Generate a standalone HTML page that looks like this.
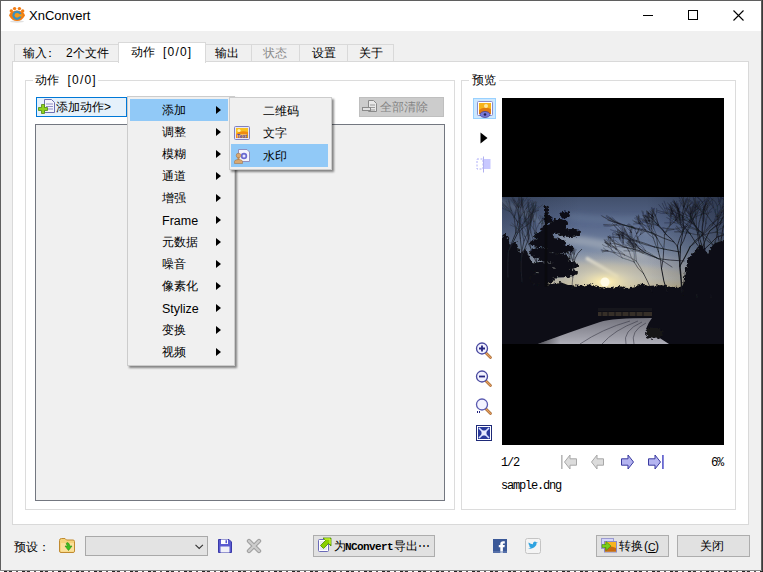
<!DOCTYPE html>
<html><head><meta charset="utf-8">
<style>
*{margin:0;padding:0;box-sizing:border-box}
html,body{width:763px;height:572px;overflow:hidden;background:#f0f0f0;font-family:"Liberation Sans",sans-serif;font-size:12px;color:#000}
.a{position:absolute}
.t{position:absolute;white-space:nowrap;line-height:12px;font-size:12px}
.m{font-family:"Liberation Mono",monospace;letter-spacing:-1.2px}
svg{position:absolute;overflow:visible}
.arr{position:absolute;width:0;height:0;border-top:4px solid transparent;border-bottom:4px solid transparent;border-left:5px solid #000}
</style></head><body>
<!-- window frame -->
<div class="a" style="left:0;top:0;width:763px;height:31px;background:#fff"></div>
<div class="a" style="left:0;top:0;width:1px;height:571px;background:#5f5f5f"></div>
<div class="a" style="left:0;top:0;width:763px;height:1px;background:#5f5f5f"></div>
<div class="a" style="left:761px;top:0;width:1px;height:571px;background:#5f5f5f"></div><div class="a" style="left:762px;top:0;width:1px;height:572px;background:#3a3a3a"></div>
<div class="a" style="left:0;top:570px;width:762px;height:1px;background:#8a8a8a"></div>
<div class="a" style="left:0;top:571px;width:763px;height:1px;background:repeating-linear-gradient(90deg,#fff 0 4px,#222 4px 7px,#ddd 7px 9px,#333 9px 12px,#fff 12px 16px,#555 16px 18px)"></div>

<!-- app icon -->
<svg style="left:8px;top:6px" width="18" height="17" viewBox="0 0 18 17">
 <ellipse cx="9" cy="15.5" rx="7" ry="1.2" fill="#000" opacity=".12"/>
 <g fill="#f27c12">
  <circle cx="3.3" cy="5" r="1.7"/><circle cx="6.6" cy="2.6" r="1.7"/><circle cx="11.4" cy="2.6" r="1.7"/><circle cx="14.7" cy="5" r="1.7"/>
  <path d="M1 9.5 Q2 5 9 4.5 Q16 5 17 9.5 Q14 15 9 15 Q4 15 1 9.5Z"/>
 </g>
 <circle cx="9" cy="9.3" r="4.6" fill="#3a8fbf"/>
 <circle cx="9" cy="9.3" r="2.4" fill="#f49a1a"/>
 <rect x="10.5" y="8.2" width="4" height="2.3" fill="#f49a1a"/>
</svg>
<div class="t" style="left:29px;top:9px;font-size:13px;line-height:13px">XnConvert</div>

<!-- caption buttons -->
<div class="a" style="left:643px;top:15px;width:10px;height:1px;background:#000"></div>
<div class="a" style="left:688px;top:10px;width:10px;height:10px;border:1px solid #000"></div>
<svg style="left:733px;top:10px" width="11" height="11" viewBox="0 0 11 11"><path d="M0.5 0.5L10.5 10.5M10.5 0.5L0.5 10.5" stroke="#000" stroke-width="1.1"/></svg>

<!-- tab control -->
<div class="a" style="left:12px;top:61px;width:737px;height:464px;background:#fff;border:1px solid #d9d9d9"></div>
<div class="a" style="left:14px;top:44px;width:105px;height:17px;background:#f0f0f0;border:1px solid #d9d9d9;border-bottom:none"></div>
<div class="a" style="left:205px;top:44px;width:47px;height:17px;background:#f0f0f0;border:1px solid #d9d9d9;border-bottom:none"></div>
<div class="a" style="left:251px;top:44px;width:49px;height:17px;background:#f0f0f0;border:1px solid #d9d9d9;border-bottom:none"></div>
<div class="a" style="left:299px;top:44px;width:49px;height:17px;background:#f0f0f0;border:1px solid #d9d9d9;border-bottom:none"></div>
<div class="a" style="left:347px;top:44px;width:47px;height:17px;background:#f0f0f0;border:1px solid #d9d9d9;border-bottom:none"></div>
<div class="a" style="left:118px;top:42px;width:88px;height:21px;background:#fff;border:1px solid #d9d9d9;border-bottom:none"></div>
<div class="t" style="left:23px;top:47px">输入</div><div class="t" style="left:44px;top:47px">：</div>
<div class="t" style="left:66px;top:47px">2</div><div class="t" style="left:72.7px;top:47px">个文件</div>
<div class="t" style="left:131px;top:46px">动作</div>
<div class="t" style="left:163px;top:46px;letter-spacing:1.2px">[0/0]</div>
<div class="t" style="left:215px;top:47px">输出</div>
<div class="t" style="left:263px;top:47px;color:#8c8c8c">状态</div>
<div class="t" style="left:312px;top:47px">设置</div>
<div class="t" style="left:359px;top:47px">关于</div>

<!-- group boxes -->
<div class="a" style="left:25px;top:80px;width:430px;height:430px;border:1px solid #dcdcdc"></div>
<div class="a" style="left:33px;top:74px;width:65px;height:12px;background:#fff"></div>
<div class="t" style="left:35px;top:74px">动作</div>
<div class="t" style="left:67.5px;top:74px;letter-spacing:1.2px">[0/0]</div>
<div class="a" style="left:461px;top:80px;width:275px;height:430px;border:1px solid #dcdcdc"></div>
<div class="a" style="left:469px;top:74px;width:30px;height:12px;background:#fff"></div>
<div class="t" style="left:472px;top:74px">预览</div>

<!-- action buttons -->
<div class="a" style="left:36px;top:97px;width:91px;height:20px;background:#e5f1fb;border:1px solid #0078d7"></div>
<svg style="left:38px;top:99px" width="18" height="16" viewBox="0 0 18 16">
 <path d="M6.5 0.5H13.5L16.5 3.5V13.5H6.5Z" fill="#f4f4fb" stroke="#7070b0"/>
 <path d="M8 5H15M8 7.5H15M8 10H15" stroke="#9090c8" stroke-width="1"/>
 <path d="M3.5 5.5H6.5V8.5H9.5V11.5H6.5V14.5H3.5V11.5H0.5V8.5H3.5Z" fill="#8fd11d" stroke="#4e8a10" stroke-width=".8"/>
</svg>
<div class="t" style="left:56px;top:101px">添加动作</div><div class="t" style="left:104px;top:101px">&gt;</div>
<div class="a" style="left:359px;top:97px;width:85px;height:20px;background:#cccccc;border:1px solid #bfbfbf"></div>
<svg style="left:362px;top:100px" width="16" height="13" viewBox="0 0 16 13">
 <path d="M6.5 0.5H11.5L14.5 3.5V11.5H6.5Z" fill="#e8e8e8" stroke="#8a8a8a"/>
 <path d="M8 5H13M8 7.5H13M8 10H13" stroke="#9a9a9a"/>
 <rect x="0.5" y="7.5" width="8" height="3" fill="#e0e0e0" stroke="#8a8a8a"/>
</svg>
<div class="t" style="left:380px;top:101px;color:#838383">全部清除</div>

<!-- listbox -->
<div class="a" style="left:35px;top:124px;width:410px;height:377px;background:#f0f0f0;border:1px solid #737780"></div>

<!-- preview -->
<div class="a" style="left:502px;top:98px;width:222px;height:347px;background:#000"></div>
<div id="photo" class="a" style="left:502px;top:197px;width:222px;height:147px;overflow:hidden;background:#111"><svg width="222" height="147" viewBox="0 0 222 147" style="left:0;top:0">
<defs>
 <linearGradient id="sky" x1="0" y1="0" x2="0" y2="1">
  <stop offset="0" stop-color="#42506c"/>
  <stop offset=".18" stop-color="#56668a"/>
  <stop offset=".34" stop-color="#7484a0"/>
  <stop offset=".46" stop-color="#a0a8b6"/>
  <stop offset=".55" stop-color="#bcbcb6"/>
  <stop offset=".61" stop-color="#c8bc9a"/>
  <stop offset=".7" stop-color="#6a6252"/>
  <stop offset="1" stop-color="#111"/>
 </linearGradient>
 <linearGradient id="skyh" x1="0" y1="0" x2="1" y2="0">
  <stop offset="0" stop-color="#141a28" stop-opacity=".25"/>
  <stop offset=".35" stop-color="#141a28" stop-opacity="0"/>
  <stop offset=".65" stop-color="#141a28" stop-opacity="0"/>
  <stop offset="1" stop-color="#141a28" stop-opacity=".45"/>
 </linearGradient>
 <radialGradient id="sun" cx="103" cy="85" r="42" gradientUnits="userSpaceOnUse" gradientTransform="translate(103 85) scale(1.7 .75) translate(-103 -85)">
  <stop offset="0" stop-color="#fffbe0"/>
  <stop offset=".1" stop-color="#f6e8b0"/>
  <stop offset=".35" stop-color="#d8d0b0" stop-opacity=".7"/>
  <stop offset="1" stop-color="#9a9a98" stop-opacity="0"/>
 </radialGradient>
 <linearGradient id="road" x1="0" y1="0" x2="0" y2="1">
  <stop offset="0" stop-color="#74747e"/>
  <stop offset="1" stop-color="#aeaeb8"/>
 </linearGradient>
 <filter id="b1" x="-10%" y="-10%" width="120%" height="120%"><feGaussianBlur stdDeviation=".5"/></filter>
 <filter id="b2" x="-20%" y="-20%" width="140%" height="140%"><feGaussianBlur stdDeviation="2.2"/></filter>
 <filter id="rough" x="-20%" y="-20%" width="140%" height="140%"><feTurbulence type="fractalNoise" baseFrequency=".35" numOctaves="2" seed="3"/><feDisplacementMap in="SourceGraphic" scale="5" xChannelSelector="R" yChannelSelector="G"/><feGaussianBlur stdDeviation=".4"/></filter>
 <filter id="b2s" x="-20%" y="-50%" width="140%" height="200%"><feGaussianBlur stdDeviation="1"/></filter>
 <filter id="b3" x="-10%" y="-10%" width="120%" height="120%"><feGaussianBlur stdDeviation=".3"/></filter>
</defs>
<rect width="222" height="147" fill="url(#sky)"/>
<g filter="url(#b2)" fill="none" stroke-linecap="round">
 <path d="M-5 2 Q30 18 60 40" stroke="#8e9cb2" stroke-width="3" opacity=".6"/>
 <path d="M60 42 Q100 45 140 58" stroke="#a8b0bc" stroke-width="9" opacity=".6"/>
 <path d="M70 20 Q110 25 150 22" stroke="#7080a0" stroke-width="8" opacity=".35"/>
 <path d="M110 28 Q140 34 165 42" stroke="#7e8ca4" stroke-width="6" opacity=".45"/>
 <path d="M70 70 Q120 68 180 78" stroke="#c0b8a4" stroke-width="7" opacity=".5"/>
 <path d="M120 58 Q160 62 190 72" stroke="#a8aab0" stroke-width="7" opacity=".5"/>
</g>
<path d="M84 61 Q100 70 116 80" stroke="#f4f0e0" stroke-width="3.2" opacity=".85" fill="none" filter="url(#b2s)"/>
<rect width="222" height="147" fill="url(#skyh)"/>
<rect width="222" height="147" fill="url(#sun)"/>
<circle cx="103" cy="85" r="4.5" fill="#fffbe6" filter="url(#b1)"/>
<!-- treeline / ground -->
<path d="M-6 89 L0 89 L20 88 L26 85 L32 88 L50 87 L58 85 L66 88 L80 89 L88 87 L96 90 L110 91 L118 89 L124 91 L134 89 L140 86 L146 89 L160 88 L170 90 L222 88 L228 88 V153 H-6Z" fill="#0f0f13" filter="url(#rough)"/>
<!-- left dark trees -->
<path d="M-6 40 L0 40 L4 36 L8 48 L14 44 L18 56 L24 52 L28 62 L34 72 L40 86 L40 95 L-6 95Z" fill="#0f0f13" filter="url(#rough)"/>
<g stroke="#1a1d26" fill="none" stroke-linecap="round" filter="url(#b3)">
<path d="M6.0 80.0Q5.5 67.1 6.5 54.0" stroke-width="1.20"/>
<path d="M6.5 54.0Q11.4 45.2 15.8 35.8" stroke-width="0.86"/>
<path d="M15.8 35.8Q18.5 28.1 18.2 20.6" stroke-width="0.62"/>
<path d="M18.2 20.6Q17.9 14.8 19.7 8.2" stroke-width="0.45"/>
<path d="M19.7 8.2Q20.5 2.7 19.6 -0.8" stroke-width="0.32"/>
<path d="M19.7 8.2Q19.4 3.7 19.6 -2.1" stroke-width="0.32"/>
<path d="M19.7 8.2Q22.9 3.6 25.3 0.2" stroke-width="0.32"/>
<path d="M18.2 20.6Q20.7 16.3 24.5 11.3" stroke-width="0.45"/>
<path d="M24.5 11.3Q26.7 7.9 26.1 2.1" stroke-width="0.32"/>
<path d="M24.5 11.3Q26.7 6.9 28.9 3.5" stroke-width="0.32"/>
<path d="M24.5 11.3Q28.1 7.6 31.0 6.5" stroke-width="0.32"/>
<path d="M18.2 20.6Q16.2 16.7 14.0 10.1" stroke-width="0.45"/>
<path d="M14.0 10.1Q12.2 7.9 9.3 2.9" stroke-width="0.32"/>
<path d="M14.0 10.1Q12.7 6.2 10.6 1.8" stroke-width="0.32"/>
<path d="M15.8 35.8Q21.3 30.2 28.2 25.7" stroke-width="0.62"/>
<path d="M28.2 25.7Q30.1 18.3 31.6 13.8" stroke-width="0.45"/>
<path d="M31.6 13.8Q33.5 9.0 34.7 5.1" stroke-width="0.32"/>
<path d="M31.6 13.8Q30.9 10.8 29.2 5.0" stroke-width="0.32"/>
<path d="M31.6 13.8Q32.1 8.0 30.6 3.6" stroke-width="0.32"/>
<path d="M28.2 25.7Q31.2 19.2 33.2 14.1" stroke-width="0.45"/>
<path d="M33.2 14.1Q33.9 8.0 33.4 4.3" stroke-width="0.32"/>
<path d="M33.2 14.1Q37.4 10.3 40.2 8.1" stroke-width="0.32"/>
<path d="M6.5 54.0Q9.5 45.9 13.8 36.0" stroke-width="0.86"/>
<path d="M13.8 36.0Q13.3 28.0 12.2 20.5" stroke-width="0.62"/>
<path d="M12.2 20.5Q13.1 14.4 14.9 8.9" stroke-width="0.45"/>
<path d="M14.9 8.9Q15.8 3.9 17.2 0.7" stroke-width="0.32"/>
<path d="M14.9 8.9Q17.3 5.8 21.3 1.1" stroke-width="0.32"/>
<path d="M12.2 20.5Q13.8 13.8 16.9 9.9" stroke-width="0.45"/>
<path d="M16.9 9.9Q19.7 5.7 20.2 2.0" stroke-width="0.32"/>
<path d="M16.9 9.9Q19.0 7.4 21.7 2.1" stroke-width="0.32"/>
<path d="M16.9 9.9Q18.4 4.6 17.5 1.5" stroke-width="0.32"/>
<path d="M12.2 20.5Q9.6 14.0 4.8 10.2" stroke-width="0.45"/>
<path d="M4.8 10.2Q1.1 5.4 -2.7 3.4" stroke-width="0.32"/>
<path d="M4.8 10.2Q2.5 8.7 -2.7 5.0" stroke-width="0.32"/>
<path d="M13.8 36.0Q14.9 28.0 17.1 21.4" stroke-width="0.62"/>
<path d="M17.1 21.4Q16.3 16.6 18.5 10.4" stroke-width="0.45"/>
<path d="M18.5 10.4Q19.1 6.9 20.0 2.5" stroke-width="0.32"/>
<path d="M18.5 10.4Q20.5 6.2 21.3 2.2" stroke-width="0.32"/>
<path d="M17.1 21.4Q15.2 15.3 16.1 10.4" stroke-width="0.45"/>
<path d="M16.1 10.4Q16.9 5.1 17.9 2.2" stroke-width="0.32"/>
<path d="M16.1 10.4Q12.4 5.4 11.7 2.6" stroke-width="0.32"/>
<path d="M16.1 10.4Q15.4 5.6 12.7 3.1" stroke-width="0.32"/>
<path d="M13.8 36.0Q19.0 30.6 22.5 25.0" stroke-width="0.62"/>
<path d="M22.5 25.0Q23.1 19.8 26.0 14.4" stroke-width="0.45"/>
<path d="M26.0 14.4Q27.5 9.1 26.9 5.4" stroke-width="0.32"/>
<path d="M26.0 14.4Q27.5 10.0 26.2 5.3" stroke-width="0.32"/>
<path d="M26.0 14.4Q29.4 11.5 32.3 8.2" stroke-width="0.32"/>
<path d="M22.5 25.0Q27.0 20.5 28.9 15.4" stroke-width="0.45"/>
<path d="M28.9 15.4Q28.4 10.8 30.1 6.0" stroke-width="0.32"/>
<path d="M28.9 15.4Q32.8 14.0 36.2 9.7" stroke-width="0.32"/>
<path d="M22.5 25.0Q25.8 22.0 29.2 16.7" stroke-width="0.45"/>
<path d="M29.2 16.7Q33.2 14.9 36.7 13.3" stroke-width="0.32"/>
<path d="M29.2 16.7Q32.1 14.1 36.6 13.0" stroke-width="0.32"/>
<path d="M20.0 85.0Q18.6 73.4 19.3 61.0" stroke-width="1.00"/>
<path d="M19.3 61.0Q22.2 52.6 26.5 42.0" stroke-width="0.72"/>
<path d="M26.5 42.0Q27.2 33.4 26.2 27.1" stroke-width="0.52"/>
<path d="M26.2 27.1Q27.7 22.1 30.1 16.5" stroke-width="0.37"/>
<path d="M30.1 16.5Q30.1 12.1 31.2 8.4" stroke-width="0.30"/>
<path d="M30.1 16.5Q30.8 13.1 33.0 8.7" stroke-width="0.30"/>
<path d="M30.1 16.5Q32.0 12.4 34.7 8.5" stroke-width="0.30"/>
<path d="M26.2 27.1Q26.1 21.3 28.2 15.5" stroke-width="0.37"/>
<path d="M28.2 15.5Q27.5 11.9 25.4 6.9" stroke-width="0.30"/>
<path d="M28.2 15.5Q30.3 12.6 33.3 8.4" stroke-width="0.30"/>
<path d="M26.5 42.0Q25.9 34.7 25.0 27.0" stroke-width="0.52"/>
<path d="M25.0 27.0Q23.3 22.5 22.2 15.8" stroke-width="0.37"/>
<path d="M22.2 15.8Q21.8 11.7 20.2 7.4" stroke-width="0.30"/>
<path d="M22.2 15.8Q20.1 11.3 20.1 6.2" stroke-width="0.30"/>
<path d="M25.0 27.0Q26.8 21.0 27.2 14.5" stroke-width="0.37"/>
<path d="M27.2 14.5Q30.0 9.0 32.6 5.5" stroke-width="0.30"/>
<path d="M27.2 14.5Q31.0 9.5 32.1 5.1" stroke-width="0.30"/>
<path d="M19.3 61.0Q19.7 52.8 22.0 43.8" stroke-width="0.72"/>
<path d="M22.0 43.8Q24.9 37.5 27.9 31.0" stroke-width="0.52"/>
<path d="M27.9 31.0Q27.4 26.1 28.6 19.3" stroke-width="0.37"/>
<path d="M28.6 19.3Q30.2 16.1 33.1 11.9" stroke-width="0.30"/>
<path d="M28.6 19.3Q26.9 15.0 27.8 10.5" stroke-width="0.30"/>
<path d="M28.6 19.3Q31.9 15.7 32.7 10.8" stroke-width="0.30"/>
<path d="M27.9 31.0Q29.2 25.4 28.8 20.3" stroke-width="0.37"/>
<path d="M28.8 20.3Q30.0 15.0 31.3 12.3" stroke-width="0.30"/>
<path d="M28.8 20.3Q29.9 14.8 31.2 12.2" stroke-width="0.30"/>
<path d="M22.0 43.8Q20.1 38.5 20.0 31.5" stroke-width="0.52"/>
<path d="M20.0 31.5Q20.2 25.2 22.4 21.8" stroke-width="0.37"/>
<path d="M22.4 21.8Q21.4 17.0 23.2 14.5" stroke-width="0.30"/>
<path d="M22.4 21.8Q23.1 17.4 22.5 14.6" stroke-width="0.30"/>
<path d="M22.4 21.8Q20.5 18.4 20.7 14.2" stroke-width="0.30"/>
<path d="M20.0 31.5Q22.8 27.9 23.9 21.6" stroke-width="0.37"/>
<path d="M23.9 21.6Q25.1 17.9 24.5 13.5" stroke-width="0.30"/>
<path d="M23.9 21.6Q26.2 16.6 27.4 14.6" stroke-width="0.30"/>
<path d="M19.3 61.0Q20.0 52.4 18.3 41.1" stroke-width="0.72"/>
<path d="M18.3 41.1Q17.3 32.6 15.4 24.8" stroke-width="0.52"/>
<path d="M15.4 24.8Q12.4 19.3 9.3 13.5" stroke-width="0.37"/>
<path d="M9.3 13.5Q7.0 9.0 6.6 3.0" stroke-width="0.30"/>
<path d="M9.3 13.5Q6.3 9.9 4.2 4.4" stroke-width="0.30"/>
<path d="M9.3 13.5Q8.2 9.8 7.3 4.5" stroke-width="0.30"/>
<path d="M15.4 24.8Q12.7 20.1 7.7 14.5" stroke-width="0.37"/>
<path d="M7.7 14.5Q4.2 13.6 -1.0 10.2" stroke-width="0.30"/>
<path d="M7.7 14.5Q3.1 11.8 0.5 8.3" stroke-width="0.30"/>
<path d="M18.3 41.1Q17.4 33.8 17.6 24.1" stroke-width="0.52"/>
<path d="M17.6 24.1Q15.7 18.3 16.6 10.5" stroke-width="0.37"/>
<path d="M16.6 10.5Q12.5 6.8 10.2 0.7" stroke-width="0.30"/>
<path d="M16.6 10.5Q14.6 6.4 11.6 1.0" stroke-width="0.30"/>
<path d="M16.6 10.5Q15.9 4.9 17.0 -0.9" stroke-width="0.30"/>
<path d="M17.6 24.1Q19.8 16.8 21.0 10.2" stroke-width="0.37"/>
<path d="M21.0 10.2Q18.8 5.7 18.1 -0.9" stroke-width="0.30"/>
<path d="M21.0 10.2Q20.7 5.3 19.2 -1.9" stroke-width="0.30"/>
<path d="M21.0 10.2Q25.4 5.6 28.3 1.5" stroke-width="0.30"/>
<path d="M32.0 88.0Q32.7 77.1 34.7 66.2" stroke-width="0.90"/>
<path d="M34.7 66.2Q34.4 57.9 35.9 49.8" stroke-width="0.65"/>
<path d="M35.9 49.8Q36.0 42.4 34.6 36.3" stroke-width="0.47"/>
<path d="M34.6 36.3Q33.6 29.7 32.9 24.9" stroke-width="0.34"/>
<path d="M32.9 24.9Q35.1 21.7 34.4 15.7" stroke-width="0.30"/>
<path d="M32.9 24.9Q31.0 20.2 30.2 15.7" stroke-width="0.30"/>
<path d="M34.6 36.3Q31.8 32.3 28.9 28.1" stroke-width="0.34"/>
<path d="M28.9 28.1Q30.1 25.4 28.4 20.9" stroke-width="0.30"/>
<path d="M28.9 28.1Q25.8 25.4 23.2 23.6" stroke-width="0.30"/>
<path d="M35.9 49.8Q38.3 43.0 39.2 37.2" stroke-width="0.47"/>
<path d="M39.2 37.2Q40.6 33.3 40.9 26.8" stroke-width="0.34"/>
<path d="M40.9 26.8Q41.1 23.9 39.8 19.2" stroke-width="0.30"/>
<path d="M40.9 26.8Q39.3 22.8 38.0 18.6" stroke-width="0.30"/>
<path d="M40.9 26.8Q43.5 23.3 44.5 20.1" stroke-width="0.30"/>
<path d="M39.2 37.2Q39.1 33.1 39.6 26.9" stroke-width="0.34"/>
<path d="M39.6 26.9Q40.1 23.5 43.5 19.6" stroke-width="0.30"/>
<path d="M39.6 26.9Q38.0 24.3 36.4 20.1" stroke-width="0.30"/>
<path d="M34.7 66.2Q30.2 57.9 28.6 50.8" stroke-width="0.65"/>
<path d="M28.6 50.8Q24.7 44.5 23.0 39.6" stroke-width="0.47"/>
<path d="M23.0 39.6Q21.6 35.3 18.7 29.8" stroke-width="0.34"/>
<path d="M18.7 29.8Q18.6 26.3 17.7 20.9" stroke-width="0.30"/>
<path d="M18.7 29.8Q18.7 25.8 20.0 21.5" stroke-width="0.30"/>
<path d="M23.0 39.6Q19.9 36.1 15.6 31.8" stroke-width="0.34"/>
<path d="M15.6 31.8Q13.1 28.4 9.9 26.2" stroke-width="0.30"/>
<path d="M15.6 31.8Q13.4 29.2 8.2 28.0" stroke-width="0.30"/>
<path d="M28.6 50.8Q25.5 43.6 25.4 37.2" stroke-width="0.47"/>
<path d="M25.4 37.2Q26.6 33.5 28.6 27.1" stroke-width="0.34"/>
<path d="M28.6 27.1Q27.9 23.4 27.4 18.3" stroke-width="0.30"/>
<path d="M28.6 27.1Q29.1 23.1 31.4 18.7" stroke-width="0.30"/>
<path d="M25.4 37.2Q24.3 32.5 20.3 28.3" stroke-width="0.34"/>
<path d="M20.3 28.3Q18.5 26.9 14.5 23.7" stroke-width="0.30"/>
<path d="M20.3 28.3Q16.6 25.6 14.1 22.9" stroke-width="0.30"/>
<path d="M28.6 50.8Q28.5 44.0 27.3 38.2" stroke-width="0.47"/>
<path d="M27.3 38.2Q25.8 34.5 24.2 29.4" stroke-width="0.34"/>
<path d="M24.2 29.4Q23.8 25.2 23.8 22.4" stroke-width="0.30"/>
<path d="M24.2 29.4Q23.6 24.6 22.2 22.4" stroke-width="0.30"/>
<path d="M27.3 38.2Q25.0 33.6 25.3 28.9" stroke-width="0.34"/>
<path d="M25.3 28.9Q24.5 26.1 24.1 21.0" stroke-width="0.30"/>
<path d="M25.3 28.9Q25.3 24.9 25.3 22.0" stroke-width="0.30"/>
<path d="M34.7 66.2Q32.5 58.0 33.2 49.5" stroke-width="0.65"/>
<path d="M33.2 49.5Q33.9 43.6 32.7 35.8" stroke-width="0.47"/>
<path d="M32.7 35.8Q31.0 31.3 31.6 24.6" stroke-width="0.34"/>
<path d="M31.6 24.6Q29.4 20.9 28.5 16.9" stroke-width="0.30"/>
<path d="M31.6 24.6Q31.6 19.7 29.6 16.8" stroke-width="0.30"/>
<path d="M32.7 35.8Q34.3 31.5 37.3 26.3" stroke-width="0.34"/>
<path d="M37.3 26.3Q39.3 24.0 41.7 20.1" stroke-width="0.30"/>
<path d="M37.3 26.3Q40.0 23.1 43.7 20.4" stroke-width="0.30"/>
<path d="M37.3 26.3Q39.6 24.5 43.4 20.8" stroke-width="0.30"/>
<path d="M33.2 49.5Q31.5 42.8 28.9 35.9" stroke-width="0.47"/>
<path d="M28.9 35.9Q28.1 30.7 26.7 25.1" stroke-width="0.34"/>
<path d="M26.7 25.1Q27.3 22.1 26.3 16.6" stroke-width="0.30"/>
<path d="M26.7 25.1Q28.6 22.4 28.5 17.0" stroke-width="0.30"/>
<path d="M28.9 35.9Q28.1 31.5 28.8 24.9" stroke-width="0.34"/>
<path d="M28.8 24.9Q29.9 20.8 31.6 17.4" stroke-width="0.30"/>
<path d="M28.8 24.9Q29.3 19.9 30.9 16.9" stroke-width="0.30"/>
<path d="M28.8 24.9Q30.1 20.5 29.8 16.8" stroke-width="0.30"/>
<path d="M70.0 92.0Q70.3 84.6 70.8 80.0" stroke-width="0.50"/>
<path d="M70.8 80.0Q70.5 74.2 69.0 70.1" stroke-width="0.36"/>
<path d="M69.0 70.1Q71.8 66.4 71.7 62.7" stroke-width="0.30"/>
<path d="M71.7 62.7Q72.5 58.7 71.1 56.7" stroke-width="0.30"/>
<path d="M71.1 56.7Q71.0 54.5 68.8 52.5" stroke-width="0.30"/>
<path d="M71.1 56.7Q72.7 54.5 71.4 51.7" stroke-width="0.30"/>
<path d="M71.7 62.7Q72.5 60.7 72.2 57.1" stroke-width="0.30"/>
<path d="M72.2 57.1Q71.3 54.4 72.3 52.8" stroke-width="0.30"/>
<path d="M72.2 57.1Q71.0 54.5 71.7 52.6" stroke-width="0.30"/>
<path d="M69.0 70.1Q67.7 66.4 68.5 61.8" stroke-width="0.30"/>
<path d="M68.5 61.8Q68.3 59.9 65.5 55.9" stroke-width="0.30"/>
<path d="M65.5 55.9Q64.0 54.4 62.5 51.9" stroke-width="0.30"/>
<path d="M65.5 55.9Q65.7 52.8 63.1 51.5" stroke-width="0.30"/>
<path d="M65.5 55.9Q65.2 52.8 62.8 51.9" stroke-width="0.30"/>
<path d="M68.5 61.8Q69.8 58.1 70.0 55.8" stroke-width="0.30"/>
<path d="M70.0 55.8Q69.3 53.0 69.0 50.6" stroke-width="0.30"/>
<path d="M70.0 55.8Q69.2 54.0 70.4 51.3" stroke-width="0.30"/>
<path d="M70.0 55.8Q70.3 53.9 72.0 51.2" stroke-width="0.30"/>
<path d="M69.0 70.1Q67.2 66.1 67.4 61.8" stroke-width="0.30"/>
<path d="M67.4 61.8Q67.3 57.2 68.6 55.1" stroke-width="0.30"/>
<path d="M68.6 55.1Q68.5 51.7 71.4 50.8" stroke-width="0.30"/>
<path d="M68.6 55.1Q68.3 51.7 66.7 50.2" stroke-width="0.30"/>
<path d="M67.4 61.8Q64.1 59.5 63.6 56.9" stroke-width="0.30"/>
<path d="M63.6 56.9Q62.6 53.7 61.9 52.1" stroke-width="0.30"/>
<path d="M63.6 56.9Q62.0 55.4 60.0 53.4" stroke-width="0.30"/>
<path d="M63.6 56.9Q62.5 56.4 60.6 52.9" stroke-width="0.30"/>
<path d="M67.4 61.8Q67.2 59.0 65.2 56.2" stroke-width="0.30"/>
<path d="M65.2 56.2Q65.1 52.9 62.4 51.8" stroke-width="0.30"/>
<path d="M65.2 56.2Q63.7 55.2 63.6 51.6" stroke-width="0.30"/>
<path d="M70.8 80.0Q69.7 74.9 71.5 70.6" stroke-width="0.36"/>
<path d="M71.5 70.6Q70.4 66.3 70.5 63.3" stroke-width="0.30"/>
<path d="M70.5 63.3Q69.2 60.9 68.5 57.7" stroke-width="0.30"/>
<path d="M68.5 57.7Q67.7 56.2 69.4 53.3" stroke-width="0.30"/>
<path d="M68.5 57.7Q68.7 54.9 68.9 53.0" stroke-width="0.30"/>
<path d="M70.5 63.3Q70.0 59.0 69.0 57.6" stroke-width="0.30"/>
<path d="M69.0 57.6Q69.3 56.1 67.9 53.0" stroke-width="0.30"/>
<path d="M69.0 57.6Q68.0 54.2 67.9 53.4" stroke-width="0.30"/>
<path d="M71.5 70.6Q72.3 66.7 70.5 63.0" stroke-width="0.30"/>
<path d="M70.5 63.0Q71.0 59.9 72.3 57.1" stroke-width="0.30"/>
<path d="M72.3 57.1Q72.3 55.8 73.0 52.1" stroke-width="0.30"/>
<path d="M72.3 57.1Q73.9 53.7 74.2 52.5" stroke-width="0.30"/>
<path d="M70.5 63.0Q69.7 61.0 68.0 57.6" stroke-width="0.30"/>
<path d="M68.0 57.6Q67.2 56.4 64.7 53.9" stroke-width="0.30"/>
<path d="M68.0 57.6Q66.5 54.6 64.7 53.8" stroke-width="0.30"/>
</g>
<!-- pine tree -->
<g fill="#0d0f14" filter="url(#rough)">
 <ellipse cx="44" cy="13" rx="2" ry="5"/>
 <ellipse cx="46" cy="22" rx="4.5" ry="4"/>
 <ellipse cx="63" cy="18" rx="5" ry="3.5"/>
 <ellipse cx="57" cy="26" rx="9" ry="4"/>
 <ellipse cx="52" cy="32" rx="13" ry="5"/>
 <ellipse cx="68" cy="36" rx="11" ry="4"/>
 <ellipse cx="42" cy="39" rx="10" ry="5"/>
 <ellipse cx="46" cy="46" rx="18" ry="5"/>
 <ellipse cx="58" cy="52" rx="14" ry="4.5"/>
 <ellipse cx="38" cy="56" rx="11" ry="5"/>
 <ellipse cx="52" cy="61" rx="16" ry="5"/>
 <ellipse cx="62" cy="68" rx="14" ry="4.5"/>
 <ellipse cx="40" cy="70" rx="12" ry="5"/>
 <ellipse cx="56" cy="76" rx="20" ry="4.5"/>
 <ellipse cx="40" cy="82" rx="12" ry="6"/>
</g>
<path d="M44 16 L44 90" stroke="#0a0a0e" stroke-width="2.5"/>
<path d="M72 75 Q70 60 80 52" stroke="#1a1c24" stroke-width=".7" fill="none"/>
<!-- right trees -->
<g stroke="#14161c" fill="none" stroke-linecap="round" filter="url(#b3)">
<path d="M180.0 95.0Q179.3 82.8 177.9 69.1" stroke-width="1.50"/>
<path d="M177.9 69.1Q184.3 58.0 188.1 49.8" stroke-width="1.08"/>
<path d="M188.1 49.8Q192.7 43.0 199.9 38.2" stroke-width="0.78"/>
<path d="M199.9 38.2Q204.0 33.5 207.8 28.4" stroke-width="0.56"/>
<path d="M207.8 28.4Q210.8 26.5 215.7 22.4" stroke-width="0.40"/>
<path d="M215.7 22.4Q216.2 18.8 218.8 14.6" stroke-width="0.30"/>
<path d="M215.7 22.4Q218.3 21.3 222.9 21.3" stroke-width="0.30"/>
<path d="M207.8 28.4Q213.2 24.2 216.2 21.2" stroke-width="0.40"/>
<path d="M216.2 21.2Q218.4 17.0 222.1 13.7" stroke-width="0.30"/>
<path d="M216.2 21.2Q219.6 18.1 223.3 17.0" stroke-width="0.30"/>
<path d="M199.9 38.2Q200.2 31.5 201.3 24.2" stroke-width="0.56"/>
<path d="M201.3 24.2Q201.8 19.8 201.5 12.6" stroke-width="0.40"/>
<path d="M201.5 12.6Q204.5 7.3 204.9 3.0" stroke-width="0.30"/>
<path d="M201.5 12.6Q202.6 8.1 204.8 4.1" stroke-width="0.30"/>
<path d="M201.3 24.2Q198.9 19.1 198.9 12.8" stroke-width="0.40"/>
<path d="M198.9 12.8Q195.4 9.9 193.9 5.9" stroke-width="0.30"/>
<path d="M198.9 12.8Q197.8 9.6 196.1 4.5" stroke-width="0.30"/>
<path d="M188.1 49.8Q193.5 45.5 200.5 38.4" stroke-width="0.78"/>
<path d="M200.5 38.4Q208.1 35.5 214.0 35.1" stroke-width="0.56"/>
<path d="M214.0 35.1Q218.1 31.5 222.7 30.0" stroke-width="0.40"/>
<path d="M222.7 30.0Q226.9 29.3 231.4 28.6" stroke-width="0.30"/>
<path d="M222.7 30.0Q227.2 29.1 229.1 25.9" stroke-width="0.30"/>
<path d="M222.7 30.0Q226.5 27.6 228.7 23.9" stroke-width="0.30"/>
<path d="M214.0 35.1Q220.9 36.1 225.1 38.0" stroke-width="0.40"/>
<path d="M225.1 38.0Q229.3 38.2 233.3 39.8" stroke-width="0.30"/>
<path d="M225.1 38.0Q229.9 38.8 235.1 37.1" stroke-width="0.30"/>
<path d="M200.5 38.4Q204.3 34.5 210.0 28.7" stroke-width="0.56"/>
<path d="M210.0 28.7Q212.5 23.9 214.1 19.6" stroke-width="0.40"/>
<path d="M214.1 19.6Q217.3 16.4 219.5 13.6" stroke-width="0.30"/>
<path d="M214.1 19.6Q216.7 15.4 217.9 13.2" stroke-width="0.30"/>
<path d="M214.1 19.6Q212.6 15.8 213.8 12.1" stroke-width="0.30"/>
<path d="M210.0 28.7Q214.1 25.2 215.4 19.6" stroke-width="0.40"/>
<path d="M215.4 19.6Q219.6 16.6 221.1 13.3" stroke-width="0.30"/>
<path d="M215.4 19.6Q219.1 18.4 223.3 15.4" stroke-width="0.30"/>
<path d="M200.5 38.4Q203.2 32.9 203.9 26.5" stroke-width="0.56"/>
<path d="M203.9 26.5Q203.0 20.5 201.3 16.8" stroke-width="0.40"/>
<path d="M201.3 16.8Q202.1 14.2 203.2 8.9" stroke-width="0.30"/>
<path d="M201.3 16.8Q201.8 14.3 203.6 8.9" stroke-width="0.30"/>
<path d="M201.3 16.8Q201.0 13.7 203.6 9.7" stroke-width="0.30"/>
<path d="M203.9 26.5Q204.2 21.5 206.1 16.7" stroke-width="0.40"/>
<path d="M206.1 16.7Q204.5 14.4 205.1 9.1" stroke-width="0.30"/>
<path d="M206.1 16.7Q207.4 12.2 211.5 10.0" stroke-width="0.30"/>
<path d="M177.9 69.1Q177.4 59.3 175.3 49.0" stroke-width="1.08"/>
<path d="M175.3 49.0Q170.2 42.0 164.0 37.3" stroke-width="0.78"/>
<path d="M164.0 37.3Q161.2 32.4 156.7 28.0" stroke-width="0.56"/>
<path d="M156.7 28.0Q155.3 24.2 153.0 18.4" stroke-width="0.40"/>
<path d="M153.0 18.4Q152.0 15.6 149.8 10.4" stroke-width="0.30"/>
<path d="M153.0 18.4Q152.1 16.0 149.6 11.2" stroke-width="0.30"/>
<path d="M156.7 28.0Q154.3 22.7 151.7 20.1" stroke-width="0.40"/>
<path d="M151.7 20.1Q149.5 18.1 145.6 15.1" stroke-width="0.30"/>
<path d="M151.7 20.1Q148.8 17.5 148.1 14.2" stroke-width="0.30"/>
<path d="M151.7 20.1Q148.3 17.0 145.4 15.9" stroke-width="0.30"/>
<path d="M156.7 28.0Q153.0 24.4 148.4 23.8" stroke-width="0.40"/>
<path d="M148.4 23.8Q144.8 24.0 141.2 21.6" stroke-width="0.30"/>
<path d="M148.4 23.8Q147.2 21.5 143.3 18.9" stroke-width="0.30"/>
<path d="M164.0 37.3Q159.3 32.2 156.2 28.0" stroke-width="0.56"/>
<path d="M156.2 28.0Q151.5 24.4 149.8 21.7" stroke-width="0.40"/>
<path d="M149.8 21.7Q147.0 19.1 146.5 16.0" stroke-width="0.30"/>
<path d="M149.8 21.7Q147.1 20.0 145.1 16.2" stroke-width="0.30"/>
<path d="M149.8 21.7Q146.8 18.8 145.9 15.1" stroke-width="0.30"/>
<path d="M156.2 28.0Q155.6 23.0 153.7 18.9" stroke-width="0.40"/>
<path d="M153.7 18.9Q155.2 15.2 154.7 11.5" stroke-width="0.30"/>
<path d="M153.7 18.9Q152.7 16.3 149.1 12.9" stroke-width="0.30"/>
<path d="M156.2 28.0Q151.7 23.4 149.7 20.9" stroke-width="0.40"/>
<path d="M149.7 20.9Q146.9 19.5 141.8 18.3" stroke-width="0.30"/>
<path d="M149.7 20.9Q145.3 21.1 141.6 18.6" stroke-width="0.30"/>
<path d="M164.0 37.3Q161.1 31.5 155.3 28.4" stroke-width="0.56"/>
<path d="M155.3 28.4Q149.4 27.1 146.1 26.3" stroke-width="0.40"/>
<path d="M146.1 26.3Q142.5 25.1 139.0 25.2" stroke-width="0.30"/>
<path d="M146.1 26.3Q141.9 24.4 139.1 22.7" stroke-width="0.30"/>
<path d="M146.1 26.3Q143.5 22.0 141.8 20.1" stroke-width="0.30"/>
<path d="M155.3 28.4Q152.9 24.8 150.5 19.4" stroke-width="0.40"/>
<path d="M150.5 19.4Q147.1 15.2 144.8 13.7" stroke-width="0.30"/>
<path d="M150.5 19.4Q148.8 17.8 144.6 14.4" stroke-width="0.30"/>
<path d="M155.3 28.4Q151.4 26.4 147.3 24.3" stroke-width="0.40"/>
<path d="M147.3 24.3Q144.0 20.1 142.8 18.7" stroke-width="0.30"/>
<path d="M147.3 24.3Q144.6 23.3 140.2 23.7" stroke-width="0.30"/>
<path d="M147.3 24.3Q144.0 23.5 140.2 24.2" stroke-width="0.30"/>
<path d="M175.3 49.0Q177.2 41.7 181.5 32.7" stroke-width="0.78"/>
<path d="M181.5 32.7Q187.0 27.6 190.1 21.5" stroke-width="0.56"/>
<path d="M190.1 21.5Q194.5 17.7 197.1 12.9" stroke-width="0.40"/>
<path d="M197.1 12.9Q200.1 11.0 204.4 7.2" stroke-width="0.30"/>
<path d="M197.1 12.9Q198.2 9.5 202.1 5.8" stroke-width="0.30"/>
<path d="M190.1 21.5Q194.6 19.0 200.7 17.0" stroke-width="0.40"/>
<path d="M200.7 17.0Q202.5 13.8 206.3 10.0" stroke-width="0.30"/>
<path d="M200.7 17.0Q206.4 16.8 209.5 14.8" stroke-width="0.30"/>
<path d="M181.5 32.7Q181.4 25.4 180.3 20.1" stroke-width="0.56"/>
<path d="M180.3 20.1Q181.6 16.5 185.3 11.1" stroke-width="0.40"/>
<path d="M185.3 11.1Q186.3 9.3 190.2 5.1" stroke-width="0.30"/>
<path d="M185.3 11.1Q186.1 6.8 186.6 3.4" stroke-width="0.30"/>
<path d="M180.3 20.1Q182.2 15.5 184.1 11.7" stroke-width="0.40"/>
<path d="M184.1 11.7Q185.4 8.1 189.4 6.6" stroke-width="0.30"/>
<path d="M184.1 11.7Q186.4 9.0 188.9 6.1" stroke-width="0.30"/>
<path d="M177.9 69.1Q177.9 58.8 178.5 49.6" stroke-width="1.08"/>
<path d="M178.5 49.6Q179.7 42.0 181.0 34.2" stroke-width="0.78"/>
<path d="M181.0 34.2Q181.9 28.6 181.0 20.4" stroke-width="0.56"/>
<path d="M181.0 20.4Q180.3 15.2 181.7 10.5" stroke-width="0.40"/>
<path d="M181.7 10.5Q178.6 6.3 177.2 3.3" stroke-width="0.30"/>
<path d="M181.7 10.5Q184.2 6.1 184.2 3.2" stroke-width="0.30"/>
<path d="M181.7 10.5Q183.9 6.7 185.4 2.6" stroke-width="0.30"/>
<path d="M181.0 20.4Q179.8 14.8 181.6 9.7" stroke-width="0.40"/>
<path d="M181.6 9.7Q182.2 6.2 184.6 1.6" stroke-width="0.30"/>
<path d="M181.6 9.7Q184.0 4.9 184.1 1.8" stroke-width="0.30"/>
<path d="M181.0 20.4Q177.3 16.3 175.4 11.3" stroke-width="0.40"/>
<path d="M175.4 11.3Q174.6 7.8 171.5 2.9" stroke-width="0.30"/>
<path d="M175.4 11.3Q174.2 7.5 170.8 4.8" stroke-width="0.30"/>
<path d="M175.4 11.3Q172.4 9.3 168.9 6.4" stroke-width="0.30"/>
<path d="M181.0 34.2Q179.0 29.4 177.7 22.2" stroke-width="0.56"/>
<path d="M177.7 22.2Q178.2 15.4 176.6 11.7" stroke-width="0.40"/>
<path d="M176.6 11.7Q173.5 8.7 172.5 5.1" stroke-width="0.30"/>
<path d="M176.6 11.7Q174.5 8.0 172.1 3.8" stroke-width="0.30"/>
<path d="M176.6 11.7Q175.8 8.6 172.0 3.9" stroke-width="0.30"/>
<path d="M177.7 22.2Q177.6 17.4 176.4 12.6" stroke-width="0.40"/>
<path d="M176.4 12.6Q178.7 10.0 179.5 6.2" stroke-width="0.30"/>
<path d="M176.4 12.6Q173.5 10.5 172.7 6.0" stroke-width="0.30"/>
<path d="M177.7 22.2Q176.4 17.0 175.6 13.4" stroke-width="0.40"/>
<path d="M175.6 13.4Q177.2 10.2 176.1 6.6" stroke-width="0.30"/>
<path d="M175.6 13.4Q174.2 9.3 170.9 8.2" stroke-width="0.30"/>
<path d="M175.6 13.4Q173.0 9.1 173.0 6.6" stroke-width="0.30"/>
<path d="M181.0 34.2Q182.9 27.9 187.7 23.7" stroke-width="0.56"/>
<path d="M187.7 23.7Q191.0 19.5 191.9 14.5" stroke-width="0.40"/>
<path d="M191.9 14.5Q193.5 11.8 195.6 7.8" stroke-width="0.30"/>
<path d="M191.9 14.5Q195.7 11.9 197.8 9.8" stroke-width="0.30"/>
<path d="M191.9 14.5Q193.7 9.7 194.6 7.2" stroke-width="0.30"/>
<path d="M187.7 23.7Q189.9 20.2 191.3 15.2" stroke-width="0.40"/>
<path d="M191.3 15.2Q193.3 12.2 197.4 10.8" stroke-width="0.30"/>
<path d="M191.3 15.2Q191.1 12.1 191.7 7.4" stroke-width="0.30"/>
<path d="M187.7 23.7Q188.5 18.7 189.8 14.8" stroke-width="0.40"/>
<path d="M189.8 14.8Q191.9 12.7 191.8 7.8" stroke-width="0.30"/>
<path d="M189.8 14.8Q189.1 11.9 191.2 7.3" stroke-width="0.30"/>
<path d="M178.5 49.6Q182.0 44.0 184.4 36.0" stroke-width="0.78"/>
<path d="M184.4 36.0Q185.6 29.6 189.3 25.5" stroke-width="0.56"/>
<path d="M189.3 25.5Q191.6 21.8 193.5 17.6" stroke-width="0.40"/>
<path d="M193.5 17.6Q195.5 17.2 199.5 14.2" stroke-width="0.30"/>
<path d="M193.5 17.6Q194.1 13.6 192.9 10.4" stroke-width="0.30"/>
<path d="M189.3 25.5Q188.1 19.6 189.5 16.2" stroke-width="0.40"/>
<path d="M189.5 16.2Q190.7 14.0 193.0 9.9" stroke-width="0.30"/>
<path d="M189.5 16.2Q190.5 11.9 190.7 9.1" stroke-width="0.30"/>
<path d="M184.4 36.0Q188.4 30.3 189.9 25.4" stroke-width="0.56"/>
<path d="M189.9 25.4Q190.1 21.2 188.3 16.9" stroke-width="0.40"/>
<path d="M188.3 16.9Q184.6 15.1 183.3 11.9" stroke-width="0.30"/>
<path d="M188.3 16.9Q188.7 13.2 187.8 10.6" stroke-width="0.30"/>
<path d="M188.3 16.9Q188.1 12.1 189.2 10.3" stroke-width="0.30"/>
<path d="M189.9 25.4Q191.6 20.0 190.6 16.3" stroke-width="0.40"/>
<path d="M190.6 16.3Q189.5 12.5 187.5 8.9" stroke-width="0.30"/>
<path d="M190.6 16.3Q190.1 11.7 191.8 8.5" stroke-width="0.30"/>
<path d="M195.0 100.0Q193.6 86.2 194.2 72.0" stroke-width="1.70"/>
<path d="M194.2 72.0Q197.1 61.4 202.5 52.2" stroke-width="1.22"/>
<path d="M202.5 52.2Q208.6 46.8 214.8 40.2" stroke-width="0.88"/>
<path d="M214.8 40.2Q221.8 38.1 227.1 36.9" stroke-width="0.63"/>
<path d="M227.1 36.9Q232.7 36.5 236.8 37.9" stroke-width="0.46"/>
<path d="M236.8 37.9Q241.4 36.5 244.7 36.4" stroke-width="0.33"/>
<path d="M236.8 37.9Q240.7 35.6 245.1 35.8" stroke-width="0.33"/>
<path d="M236.8 37.9Q240.1 37.0 244.0 37.7" stroke-width="0.33"/>
<path d="M227.1 36.9Q229.9 33.8 235.3 31.3" stroke-width="0.46"/>
<path d="M235.3 31.3Q238.8 28.8 242.2 28.9" stroke-width="0.33"/>
<path d="M235.3 31.3Q238.5 27.5 239.1 24.4" stroke-width="0.33"/>
<path d="M214.8 40.2Q220.8 37.7 227.9 34.8" stroke-width="0.63"/>
<path d="M227.9 34.8Q232.1 33.5 238.2 31.4" stroke-width="0.46"/>
<path d="M238.2 31.4Q242.6 28.3 246.3 27.4" stroke-width="0.33"/>
<path d="M238.2 31.4Q241.6 29.2 244.1 25.7" stroke-width="0.33"/>
<path d="M227.9 34.8Q230.3 29.5 234.2 25.1" stroke-width="0.46"/>
<path d="M234.2 25.1Q235.8 19.8 239.2 17.3" stroke-width="0.33"/>
<path d="M234.2 25.1Q234.5 20.1 237.1 15.6" stroke-width="0.33"/>
<path d="M227.9 34.8Q233.0 34.3 238.2 35.7" stroke-width="0.46"/>
<path d="M238.2 35.7Q243.2 36.9 246.2 37.0" stroke-width="0.33"/>
<path d="M238.2 35.7Q241.9 37.4 245.2 38.1" stroke-width="0.33"/>
<path d="M202.5 52.2Q202.8 45.2 200.3 36.2" stroke-width="0.88"/>
<path d="M200.3 36.2Q199.6 29.6 201.2 23.6" stroke-width="0.63"/>
<path d="M201.2 23.6Q201.7 17.4 203.9 12.9" stroke-width="0.46"/>
<path d="M203.9 12.9Q206.0 8.5 208.4 5.3" stroke-width="0.33"/>
<path d="M203.9 12.9Q205.4 9.4 209.8 6.3" stroke-width="0.33"/>
<path d="M201.2 23.6Q201.1 18.3 201.0 12.8" stroke-width="0.46"/>
<path d="M201.0 12.8Q202.8 8.5 203.9 4.3" stroke-width="0.33"/>
<path d="M201.0 12.8Q202.0 9.0 205.6 6.2" stroke-width="0.33"/>
<path d="M200.3 36.2Q195.4 32.9 192.3 27.5" stroke-width="0.63"/>
<path d="M192.3 27.5Q188.9 25.8 183.1 23.0" stroke-width="0.46"/>
<path d="M183.1 23.0Q177.6 24.1 174.2 22.5" stroke-width="0.33"/>
<path d="M183.1 23.0Q181.1 21.2 176.9 17.0" stroke-width="0.33"/>
<path d="M192.3 27.5Q189.6 23.1 188.6 18.3" stroke-width="0.46"/>
<path d="M188.6 18.3Q187.2 14.3 187.5 10.1" stroke-width="0.33"/>
<path d="M188.6 18.3Q184.4 14.7 183.1 13.2" stroke-width="0.33"/>
<path d="M188.6 18.3Q189.6 15.2 189.1 9.8" stroke-width="0.33"/>
<path d="M194.2 72.0Q198.3 61.2 200.6 50.7" stroke-width="1.22"/>
<path d="M200.6 50.7Q203.1 42.2 207.6 34.1" stroke-width="0.88"/>
<path d="M207.6 34.1Q212.9 29.3 218.4 26.8" stroke-width="0.63"/>
<path d="M218.4 26.8Q219.2 22.3 221.8 16.9" stroke-width="0.46"/>
<path d="M221.8 16.9Q221.5 12.1 222.2 9.2" stroke-width="0.33"/>
<path d="M221.8 16.9Q219.7 13.2 220.2 8.6" stroke-width="0.33"/>
<path d="M221.8 16.9Q220.5 13.3 221.8 8.6" stroke-width="0.33"/>
<path d="M218.4 26.8Q220.7 23.4 225.1 19.2" stroke-width="0.46"/>
<path d="M225.1 19.2Q224.8 15.8 226.1 11.3" stroke-width="0.33"/>
<path d="M225.1 19.2Q230.5 18.1 233.2 16.5" stroke-width="0.33"/>
<path d="M218.4 26.8Q222.1 25.0 225.8 20.9" stroke-width="0.46"/>
<path d="M225.8 20.9Q228.9 18.6 232.5 16.8" stroke-width="0.33"/>
<path d="M225.8 20.9Q227.4 16.3 231.3 14.6" stroke-width="0.33"/>
<path d="M207.6 34.1Q211.4 30.3 217.7 25.7" stroke-width="0.63"/>
<path d="M217.7 25.7Q220.8 21.3 224.2 18.2" stroke-width="0.46"/>
<path d="M224.2 18.2Q226.0 15.5 227.6 10.7" stroke-width="0.33"/>
<path d="M224.2 18.2Q224.7 15.6 227.5 10.7" stroke-width="0.33"/>
<path d="M224.2 18.2Q225.5 13.7 228.1 11.3" stroke-width="0.33"/>
<path d="M217.7 25.7Q219.3 22.8 223.0 17.4" stroke-width="0.46"/>
<path d="M223.0 17.4Q223.2 14.9 226.2 10.6" stroke-width="0.33"/>
<path d="M223.0 17.4Q224.5 13.9 226.9 11.3" stroke-width="0.33"/>
<path d="M223.0 17.4Q224.1 14.5 222.4 9.9" stroke-width="0.33"/>
<path d="M200.6 50.7Q197.3 42.9 196.2 32.7" stroke-width="0.88"/>
<path d="M196.2 32.7Q191.4 27.9 185.2 20.6" stroke-width="0.63"/>
<path d="M185.2 20.6Q182.2 14.1 181.3 8.9" stroke-width="0.46"/>
<path d="M181.3 8.9Q180.6 5.7 177.2 0.4" stroke-width="0.33"/>
<path d="M181.3 8.9Q180.5 4.0 181.5 -1.9" stroke-width="0.33"/>
<path d="M185.2 20.6Q178.9 17.9 174.2 16.1" stroke-width="0.46"/>
<path d="M174.2 16.1Q170.3 14.1 165.0 11.5" stroke-width="0.33"/>
<path d="M174.2 16.1Q171.1 12.8 168.3 8.4" stroke-width="0.33"/>
<path d="M174.2 16.1Q169.8 13.7 166.7 9.9" stroke-width="0.33"/>
<path d="M196.2 32.7Q196.8 25.1 199.2 17.9" stroke-width="0.63"/>
<path d="M199.2 17.9Q200.5 12.7 203.7 7.8" stroke-width="0.46"/>
<path d="M203.7 7.8Q206.6 4.1 208.6 0.0" stroke-width="0.33"/>
<path d="M203.7 7.8Q205.8 3.5 205.7 -1.5" stroke-width="0.33"/>
<path d="M203.7 7.8Q201.6 3.0 202.4 -1.8" stroke-width="0.33"/>
<path d="M199.2 17.9Q202.8 12.5 205.6 8.3" stroke-width="0.46"/>
<path d="M205.6 8.3Q207.5 4.5 211.0 1.9" stroke-width="0.33"/>
<path d="M205.6 8.3Q206.7 3.5 206.4 -1.2" stroke-width="0.33"/>
<path d="M196.2 32.7Q191.3 26.1 188.5 20.0" stroke-width="0.63"/>
<path d="M188.5 20.0Q186.5 15.7 185.3 9.4" stroke-width="0.46"/>
<path d="M185.3 9.4Q187.4 5.6 187.8 0.8" stroke-width="0.33"/>
<path d="M185.3 9.4Q185.3 6.1 185.5 0.1" stroke-width="0.33"/>
<path d="M185.3 9.4Q181.8 5.9 180.5 2.8" stroke-width="0.33"/>
<path d="M188.5 20.0Q186.0 16.2 182.3 9.5" stroke-width="0.46"/>
<path d="M182.3 9.5Q181.8 6.4 181.6 0.7" stroke-width="0.33"/>
<path d="M182.3 9.5Q182.0 5.4 179.5 -0.0" stroke-width="0.33"/>
<path d="M188.5 20.0Q182.2 17.0 176.9 14.1" stroke-width="0.46"/>
<path d="M176.9 14.1Q171.0 14.6 166.6 12.3" stroke-width="0.33"/>
<path d="M176.9 14.1Q173.9 8.8 171.9 5.0" stroke-width="0.33"/>
<path d="M209.0 100.0Q208.7 85.2 209.6 72.0" stroke-width="1.50"/>
<path d="M209.6 72.0Q212.6 60.6 218.0 48.9" stroke-width="1.08"/>
<path d="M218.0 48.9Q215.6 38.1 214.5 29.4" stroke-width="0.78"/>
<path d="M214.5 29.4Q208.6 24.9 204.8 17.7" stroke-width="0.56"/>
<path d="M204.8 17.7Q198.3 14.7 194.6 9.3" stroke-width="0.40"/>
<path d="M194.6 9.3Q191.6 6.6 186.5 3.8" stroke-width="0.30"/>
<path d="M194.6 9.3Q191.4 4.5 185.9 1.9" stroke-width="0.30"/>
<path d="M204.8 17.7Q201.4 11.5 200.4 5.1" stroke-width="0.40"/>
<path d="M200.4 5.1Q196.0 0.2 194.0 -3.2" stroke-width="0.30"/>
<path d="M200.4 5.1Q195.8 1.4 193.6 -1.8" stroke-width="0.30"/>
<path d="M214.5 29.4Q216.2 22.3 219.6 15.3" stroke-width="0.56"/>
<path d="M219.6 15.3Q219.4 10.1 216.9 4.6" stroke-width="0.40"/>
<path d="M216.9 4.6Q219.1 0.4 220.2 -3.5" stroke-width="0.30"/>
<path d="M216.9 4.6Q215.6 -0.9 215.9 -3.7" stroke-width="0.30"/>
<path d="M219.6 15.3Q222.8 10.6 227.9 6.8" stroke-width="0.40"/>
<path d="M227.9 6.8Q233.6 4.6 236.5 3.5" stroke-width="0.30"/>
<path d="M227.9 6.8Q231.2 2.8 232.0 -2.2" stroke-width="0.30"/>
<path d="M218.0 48.9Q219.9 39.1 221.1 29.8" stroke-width="0.78"/>
<path d="M221.1 29.8Q224.5 20.5 225.3 14.1" stroke-width="0.56"/>
<path d="M225.3 14.1Q224.2 9.0 221.7 2.4" stroke-width="0.40"/>
<path d="M221.7 2.4Q221.7 -1.0 224.0 -7.5" stroke-width="0.30"/>
<path d="M221.7 2.4Q222.9 -2.8 224.5 -6.6" stroke-width="0.30"/>
<path d="M221.7 2.4Q217.2 -0.3 214.4 -3.9" stroke-width="0.30"/>
<path d="M225.3 14.1Q227.4 7.1 231.6 2.0" stroke-width="0.40"/>
<path d="M231.6 2.0Q234.9 -3.1 235.7 -8.9" stroke-width="0.30"/>
<path d="M231.6 2.0Q235.8 -1.5 238.8 -6.5" stroke-width="0.30"/>
<path d="M221.1 29.8Q225.4 24.6 229.6 18.3" stroke-width="0.56"/>
<path d="M229.6 18.3Q233.6 14.7 238.8 9.8" stroke-width="0.40"/>
<path d="M238.8 9.8Q241.7 7.5 246.9 3.2" stroke-width="0.30"/>
<path d="M238.8 9.8Q240.3 5.5 243.2 1.9" stroke-width="0.30"/>
<path d="M229.6 18.3Q234.0 14.6 237.7 8.8" stroke-width="0.40"/>
<path d="M237.7 8.8Q240.5 4.4 243.5 0.8" stroke-width="0.30"/>
<path d="M237.7 8.8Q240.0 4.0 244.6 1.4" stroke-width="0.30"/>
<path d="M209.6 72.0Q203.1 63.5 199.1 52.5" stroke-width="1.08"/>
<path d="M199.1 52.5Q195.8 44.5 195.5 35.9" stroke-width="0.78"/>
<path d="M195.5 35.9Q194.0 29.2 194.1 21.1" stroke-width="0.56"/>
<path d="M194.1 21.1Q192.4 14.2 193.1 9.3" stroke-width="0.40"/>
<path d="M193.1 9.3Q193.6 4.2 193.6 -0.9" stroke-width="0.30"/>
<path d="M193.1 9.3Q192.3 4.1 191.0 -0.9" stroke-width="0.30"/>
<path d="M194.1 21.1Q195.3 16.3 196.9 9.2" stroke-width="0.40"/>
<path d="M196.9 9.2Q201.1 4.0 204.1 1.8" stroke-width="0.30"/>
<path d="M196.9 9.2Q200.1 4.8 204.0 2.7" stroke-width="0.30"/>
<path d="M195.5 35.9Q193.1 29.3 191.4 22.1" stroke-width="0.56"/>
<path d="M191.4 22.1Q194.5 18.1 195.1 11.9" stroke-width="0.40"/>
<path d="M195.1 11.9Q195.1 8.9 195.6 4.0" stroke-width="0.30"/>
<path d="M195.1 11.9Q194.9 6.5 194.0 3.8" stroke-width="0.30"/>
<path d="M195.1 11.9Q197.2 7.0 197.1 4.2" stroke-width="0.30"/>
<path d="M191.4 22.1Q193.4 17.4 193.1 10.7" stroke-width="0.40"/>
<path d="M193.1 10.7Q196.9 7.5 198.6 3.1" stroke-width="0.30"/>
<path d="M193.1 10.7Q194.0 6.6 192.1 2.1" stroke-width="0.30"/>
<path d="M193.1 10.7Q193.5 5.4 192.8 1.5" stroke-width="0.30"/>
<path d="M199.1 52.5Q192.6 44.8 188.1 36.9" stroke-width="0.78"/>
<path d="M188.1 36.9Q181.6 32.2 176.0 25.4" stroke-width="0.56"/>
<path d="M176.0 25.4Q172.7 18.9 169.9 14.5" stroke-width="0.40"/>
<path d="M169.9 14.5Q170.9 11.3 169.1 5.4" stroke-width="0.30"/>
<path d="M169.9 14.5Q168.6 9.5 165.8 5.9" stroke-width="0.30"/>
<path d="M176.0 25.4Q170.7 20.5 165.7 15.3" stroke-width="0.40"/>
<path d="M165.7 15.3Q164.3 8.8 162.1 4.0" stroke-width="0.30"/>
<path d="M165.7 15.3Q161.2 15.6 154.5 13.1" stroke-width="0.30"/>
<path d="M176.0 25.4Q169.2 21.7 164.9 16.7" stroke-width="0.40"/>
<path d="M164.9 16.7Q160.0 12.0 156.9 7.7" stroke-width="0.30"/>
<path d="M164.9 16.7Q161.9 10.3 160.3 6.3" stroke-width="0.30"/>
<path d="M164.9 16.7Q158.2 16.9 154.1 14.6" stroke-width="0.30"/>
<path d="M188.1 36.9Q184.3 31.2 178.1 25.8" stroke-width="0.56"/>
<path d="M178.1 25.8Q178.7 19.9 176.5 14.9" stroke-width="0.40"/>
<path d="M176.5 14.9Q174.9 10.3 175.3 6.5" stroke-width="0.30"/>
<path d="M176.5 14.9Q172.8 11.7 171.8 7.7" stroke-width="0.30"/>
<path d="M178.1 25.8Q173.7 20.8 171.1 16.2" stroke-width="0.40"/>
<path d="M171.1 16.2Q168.5 12.3 167.5 7.7" stroke-width="0.30"/>
<path d="M171.1 16.2Q171.9 11.0 170.3 7.3" stroke-width="0.30"/>
<path d="M178.1 25.8Q173.3 23.0 170.5 17.5" stroke-width="0.40"/>
<path d="M170.5 17.5Q170.4 13.6 168.6 9.2" stroke-width="0.30"/>
<path d="M170.5 17.5Q167.1 15.3 163.1 10.8" stroke-width="0.30"/>
<path d="M188.1 36.9Q182.7 31.1 179.4 25.0" stroke-width="0.56"/>
<path d="M179.4 25.0Q177.8 19.4 176.6 13.1" stroke-width="0.40"/>
<path d="M176.6 13.1Q174.5 10.0 174.6 4.3" stroke-width="0.30"/>
<path d="M176.6 13.1Q174.7 9.1 170.8 4.1" stroke-width="0.30"/>
<path d="M179.4 25.0Q176.5 21.9 170.8 17.0" stroke-width="0.40"/>
<path d="M170.8 17.0Q165.2 17.3 161.0 15.0" stroke-width="0.30"/>
<path d="M170.8 17.0Q170.6 11.7 168.0 7.8" stroke-width="0.30"/>
<path d="M165.0 95.0Q161.4 84.5 159.5 71.6" stroke-width="1.00"/>
<path d="M159.5 71.6Q159.3 63.4 156.4 54.4" stroke-width="0.72"/>
<path d="M156.4 54.4Q155.7 49.1 154.8 41.0" stroke-width="0.52"/>
<path d="M154.8 41.0Q154.6 36.2 151.6 31.0" stroke-width="0.37"/>
<path d="M151.6 31.0Q152.2 26.6 151.1 22.9" stroke-width="0.30"/>
<path d="M151.1 22.9Q151.7 19.1 153.4 17.5" stroke-width="0.30"/>
<path d="M151.1 22.9Q149.8 18.9 148.6 17.1" stroke-width="0.30"/>
<path d="M151.6 31.0Q151.0 25.7 149.4 23.1" stroke-width="0.30"/>
<path d="M149.4 23.1Q147.0 21.2 145.7 17.2" stroke-width="0.30"/>
<path d="M149.4 23.1Q150.5 19.4 151.6 16.4" stroke-width="0.30"/>
<path d="M154.8 41.0Q149.9 35.6 147.5 32.9" stroke-width="0.37"/>
<path d="M147.5 32.9Q146.2 28.9 144.1 24.9" stroke-width="0.30"/>
<path d="M144.1 24.9Q143.3 20.9 140.5 18.3" stroke-width="0.30"/>
<path d="M144.1 24.9Q141.6 21.8 138.7 21.3" stroke-width="0.30"/>
<path d="M147.5 32.9Q143.5 29.6 140.7 26.7" stroke-width="0.30"/>
<path d="M140.7 26.7Q138.1 26.9 133.1 24.2" stroke-width="0.30"/>
<path d="M140.7 26.7Q138.8 24.5 136.5 20.5" stroke-width="0.30"/>
<path d="M147.5 32.9Q147.6 29.0 147.0 23.7" stroke-width="0.30"/>
<path d="M147.0 23.7Q146.9 19.5 146.6 15.7" stroke-width="0.30"/>
<path d="M147.0 23.7Q147.2 20.4 146.6 16.4" stroke-width="0.30"/>
<path d="M147.0 23.7Q144.2 21.9 143.2 17.8" stroke-width="0.30"/>
<path d="M154.8 41.0Q151.6 35.2 149.4 31.7" stroke-width="0.37"/>
<path d="M149.4 31.7Q148.8 26.7 147.6 23.7" stroke-width="0.30"/>
<path d="M147.6 23.7Q147.0 20.8 144.1 17.8" stroke-width="0.30"/>
<path d="M147.6 23.7Q146.1 20.2 143.3 18.4" stroke-width="0.30"/>
<path d="M147.6 23.7Q149.7 21.2 149.8 17.9" stroke-width="0.30"/>
<path d="M149.4 31.7Q147.4 29.3 145.1 25.2" stroke-width="0.30"/>
<path d="M145.1 25.2Q145.2 21.1 143.9 19.3" stroke-width="0.30"/>
<path d="M145.1 25.2Q144.2 20.8 141.7 19.3" stroke-width="0.30"/>
<path d="M145.1 25.2Q142.5 22.2 139.8 22.0" stroke-width="0.30"/>
<path d="M156.4 54.4Q153.4 47.8 151.2 40.9" stroke-width="0.52"/>
<path d="M151.2 40.9Q146.3 38.0 143.2 33.0" stroke-width="0.37"/>
<path d="M143.2 33.0Q140.1 30.1 137.1 26.6" stroke-width="0.30"/>
<path d="M137.1 26.6Q136.5 23.5 134.0 20.4" stroke-width="0.30"/>
<path d="M137.1 26.6Q133.3 26.2 130.7 23.4" stroke-width="0.30"/>
<path d="M143.2 33.0Q141.2 29.2 138.0 26.0" stroke-width="0.30"/>
<path d="M138.0 26.0Q136.3 24.2 132.4 21.1" stroke-width="0.30"/>
<path d="M138.0 26.0Q138.9 21.4 136.9 18.7" stroke-width="0.30"/>
<path d="M138.0 26.0Q136.7 23.3 136.0 19.4" stroke-width="0.30"/>
<path d="M143.2 33.0Q140.3 30.4 137.3 25.9" stroke-width="0.30"/>
<path d="M137.3 25.9Q135.2 22.4 136.0 19.0" stroke-width="0.30"/>
<path d="M137.3 25.9Q136.7 23.6 134.7 19.3" stroke-width="0.30"/>
<path d="M151.2 40.9Q149.0 36.4 149.6 29.2" stroke-width="0.37"/>
<path d="M149.6 29.2Q149.9 25.5 151.1 19.9" stroke-width="0.30"/>
<path d="M151.1 19.9Q149.5 15.6 148.0 13.8" stroke-width="0.30"/>
<path d="M151.1 19.9Q149.7 17.9 149.8 12.9" stroke-width="0.30"/>
<path d="M149.6 29.2Q150.9 24.0 150.1 19.2" stroke-width="0.30"/>
<path d="M150.1 19.2Q150.5 14.3 151.5 11.9" stroke-width="0.30"/>
<path d="M150.1 19.2Q152.6 15.4 152.5 11.2" stroke-width="0.30"/>
<path d="M150.1 19.2Q151.0 15.8 151.4 11.8" stroke-width="0.30"/>
<path d="M149.6 29.2Q146.2 24.4 145.7 21.1" stroke-width="0.30"/>
<path d="M145.7 21.1Q145.9 17.6 144.8 14.3" stroke-width="0.30"/>
<path d="M145.7 21.1Q144.1 17.8 144.7 14.7" stroke-width="0.30"/>
<path d="M159.5 71.6Q161.9 61.1 161.7 52.4" stroke-width="0.72"/>
<path d="M161.7 52.4Q162.8 44.9 162.5 37.9" stroke-width="0.52"/>
<path d="M162.5 37.9Q164.7 34.4 167.9 28.8" stroke-width="0.37"/>
<path d="M167.9 28.8Q170.2 27.3 173.5 23.4" stroke-width="0.30"/>
<path d="M173.5 23.4Q174.5 21.0 177.3 19.3" stroke-width="0.30"/>
<path d="M173.5 23.4Q173.6 19.1 174.4 17.5" stroke-width="0.30"/>
<path d="M173.5 23.4Q175.0 20.1 175.1 17.1" stroke-width="0.30"/>
<path d="M167.9 28.8Q171.2 26.1 174.0 22.7" stroke-width="0.30"/>
<path d="M174.0 22.7Q176.8 19.1 178.3 18.1" stroke-width="0.30"/>
<path d="M174.0 22.7Q176.1 20.0 178.2 17.8" stroke-width="0.30"/>
<path d="M162.5 37.9Q164.4 31.3 168.3 27.3" stroke-width="0.37"/>
<path d="M168.3 27.3Q167.3 22.1 168.8 18.1" stroke-width="0.30"/>
<path d="M168.8 18.1Q169.1 13.0 170.1 10.7" stroke-width="0.30"/>
<path d="M168.8 18.1Q170.3 14.9 172.8 11.7" stroke-width="0.30"/>
<path d="M168.8 18.1Q169.3 14.7 169.6 11.4" stroke-width="0.30"/>
<path d="M168.3 27.3Q169.1 22.6 169.2 17.0" stroke-width="0.30"/>
<path d="M169.2 17.0Q168.7 12.2 167.8 9.2" stroke-width="0.30"/>
<path d="M169.2 17.0Q167.9 13.4 165.5 10.5" stroke-width="0.30"/>
<path d="M168.3 27.3Q169.8 23.5 174.0 19.3" stroke-width="0.30"/>
<path d="M174.0 19.3Q174.4 16.7 177.6 11.7" stroke-width="0.30"/>
<path d="M174.0 19.3Q178.2 18.8 180.7 16.1" stroke-width="0.30"/>
<path d="M161.7 52.4Q156.9 44.9 153.6 38.5" stroke-width="0.52"/>
<path d="M153.6 38.5Q148.9 35.3 146.2 29.5" stroke-width="0.37"/>
<path d="M146.2 29.5Q142.2 27.5 138.2 26.9" stroke-width="0.30"/>
<path d="M138.2 26.9Q134.3 26.5 131.4 27.0" stroke-width="0.30"/>
<path d="M138.2 26.9Q135.8 27.0 132.3 24.5" stroke-width="0.30"/>
<path d="M146.2 29.5Q144.3 25.9 142.9 20.9" stroke-width="0.30"/>
<path d="M142.9 20.9Q141.8 18.4 140.9 14.3" stroke-width="0.30"/>
<path d="M142.9 20.9Q140.2 17.7 139.9 13.8" stroke-width="0.30"/>
<path d="M153.6 38.5Q148.0 36.2 143.5 32.6" stroke-width="0.37"/>
<path d="M143.5 32.6Q139.4 32.1 133.4 31.9" stroke-width="0.30"/>
<path d="M133.4 31.9Q129.3 28.5 126.9 26.8" stroke-width="0.30"/>
<path d="M133.4 31.9Q131.1 30.8 126.6 27.5" stroke-width="0.30"/>
<path d="M133.4 31.9Q130.8 30.6 125.6 27.6" stroke-width="0.30"/>
<path d="M143.5 32.6Q141.5 30.0 138.7 24.8" stroke-width="0.30"/>
<path d="M138.7 24.8Q135.2 22.0 134.1 18.8" stroke-width="0.30"/>
<path d="M138.7 24.8Q136.1 22.9 136.4 18.0" stroke-width="0.30"/>
<path d="M220.0 95.0Q221.8 82.2 221.8 69.1" stroke-width="1.20"/>
<path d="M221.8 69.1Q225.5 60.7 231.6 51.2" stroke-width="0.86"/>
<path d="M231.6 51.2Q238.1 46.3 242.7 39.1" stroke-width="0.62"/>
<path d="M242.7 39.1Q242.3 31.9 243.8 25.0" stroke-width="0.45"/>
<path d="M243.8 25.0Q243.4 18.4 245.7 14.8" stroke-width="0.32"/>
<path d="M245.7 14.8Q247.5 11.1 251.1 9.2" stroke-width="0.30"/>
<path d="M245.7 14.8Q249.3 10.4 252.1 8.4" stroke-width="0.30"/>
<path d="M245.7 14.8Q244.6 10.9 243.5 6.0" stroke-width="0.30"/>
<path d="M243.8 25.0Q242.1 17.8 242.0 13.0" stroke-width="0.32"/>
<path d="M242.0 13.0Q243.0 7.3 244.9 4.5" stroke-width="0.30"/>
<path d="M242.0 13.0Q239.6 9.5 236.5 6.2" stroke-width="0.30"/>
<path d="M242.0 13.0Q243.4 8.0 245.0 2.9" stroke-width="0.30"/>
<path d="M242.7 39.1Q246.7 33.2 248.5 25.9" stroke-width="0.45"/>
<path d="M248.5 25.9Q252.0 21.4 253.0 14.6" stroke-width="0.32"/>
<path d="M253.0 14.6Q251.8 11.1 250.4 5.7" stroke-width="0.30"/>
<path d="M253.0 14.6Q252.8 10.8 255.3 4.7" stroke-width="0.30"/>
<path d="M248.5 25.9Q248.3 22.2 247.2 15.5" stroke-width="0.32"/>
<path d="M247.2 15.5Q246.4 12.7 246.6 7.8" stroke-width="0.30"/>
<path d="M247.2 15.5Q248.2 11.9 248.5 7.7" stroke-width="0.30"/>
<path d="M231.6 51.2Q230.4 43.6 231.7 34.1" stroke-width="0.62"/>
<path d="M231.7 34.1Q229.8 26.4 229.0 20.6" stroke-width="0.45"/>
<path d="M229.0 20.6Q232.0 16.5 232.2 9.7" stroke-width="0.32"/>
<path d="M232.2 9.7Q234.2 6.8 236.5 1.8" stroke-width="0.30"/>
<path d="M232.2 9.7Q236.3 5.1 238.7 3.3" stroke-width="0.30"/>
<path d="M229.0 20.6Q226.9 15.4 225.2 10.0" stroke-width="0.32"/>
<path d="M225.2 10.0Q225.7 6.1 225.6 0.7" stroke-width="0.30"/>
<path d="M225.2 10.0Q225.5 4.4 223.4 1.0" stroke-width="0.30"/>
<path d="M229.0 20.6Q230.3 14.1 230.4 9.5" stroke-width="0.32"/>
<path d="M230.4 9.5Q228.4 4.9 228.8 0.8" stroke-width="0.30"/>
<path d="M230.4 9.5Q229.1 5.8 229.2 1.4" stroke-width="0.30"/>
<path d="M230.4 9.5Q231.7 6.2 233.2 1.9" stroke-width="0.30"/>
<path d="M231.7 34.1Q235.1 28.2 239.1 23.3" stroke-width="0.45"/>
<path d="M239.1 23.3Q244.6 21.1 247.2 18.1" stroke-width="0.32"/>
<path d="M247.2 18.1Q251.4 16.3 253.8 13.8" stroke-width="0.30"/>
<path d="M247.2 18.1Q250.0 13.3 251.2 10.8" stroke-width="0.30"/>
<path d="M247.2 18.1Q248.5 14.0 250.5 11.4" stroke-width="0.30"/>
<path d="M239.1 23.3Q238.7 19.8 239.7 13.4" stroke-width="0.32"/>
<path d="M239.7 13.4Q237.3 9.0 235.6 7.0" stroke-width="0.30"/>
<path d="M239.7 13.4Q237.9 8.7 237.6 5.0" stroke-width="0.30"/>
<path d="M231.7 34.1Q234.0 27.7 238.6 21.6" stroke-width="0.45"/>
<path d="M238.6 21.6Q244.1 19.0 249.3 15.9" stroke-width="0.32"/>
<path d="M249.3 15.9Q252.6 13.0 254.4 7.9" stroke-width="0.30"/>
<path d="M249.3 15.9Q252.9 16.9 259.4 15.3" stroke-width="0.30"/>
<path d="M249.3 15.9Q254.8 14.5 257.9 11.6" stroke-width="0.30"/>
<path d="M238.6 21.6Q238.1 16.9 240.3 10.6" stroke-width="0.32"/>
<path d="M240.3 10.6Q238.4 5.0 237.9 1.7" stroke-width="0.30"/>
<path d="M240.3 10.6Q238.2 6.3 237.2 1.3" stroke-width="0.30"/>
<path d="M238.6 21.6Q243.3 16.6 245.5 14.0" stroke-width="0.32"/>
<path d="M245.5 14.0Q246.6 10.7 246.7 6.1" stroke-width="0.30"/>
<path d="M245.5 14.0Q249.8 13.0 253.2 10.5" stroke-width="0.30"/>
<path d="M221.8 69.1Q217.2 58.9 212.0 48.8" stroke-width="0.86"/>
<path d="M212.0 48.8Q204.6 43.9 199.7 38.1" stroke-width="0.62"/>
<path d="M199.7 38.1Q192.6 37.9 188.2 36.3" stroke-width="0.45"/>
<path d="M188.2 36.3Q184.3 35.9 179.4 35.8" stroke-width="0.32"/>
<path d="M179.4 35.8Q177.4 33.4 173.8 30.7" stroke-width="0.30"/>
<path d="M179.4 35.8Q176.6 34.1 172.5 34.7" stroke-width="0.30"/>
<path d="M179.4 35.8Q176.9 34.1 173.9 32.1" stroke-width="0.30"/>
<path d="M188.2 36.3Q183.0 34.0 179.5 34.3" stroke-width="0.32"/>
<path d="M179.5 34.3Q176.3 31.6 174.6 28.9" stroke-width="0.30"/>
<path d="M179.5 34.3Q177.0 32.9 174.2 29.2" stroke-width="0.30"/>
<path d="M179.5 34.3Q176.3 35.0 173.0 34.9" stroke-width="0.30"/>
<path d="M199.7 38.1Q196.7 33.2 191.8 26.5" stroke-width="0.45"/>
<path d="M191.8 26.5Q186.2 24.3 182.1 22.5" stroke-width="0.32"/>
<path d="M182.1 22.5Q178.7 20.4 175.0 20.1" stroke-width="0.30"/>
<path d="M182.1 22.5Q178.7 21.8 173.1 23.9" stroke-width="0.30"/>
<path d="M182.1 22.5Q180.4 21.2 175.7 17.3" stroke-width="0.30"/>
<path d="M191.8 26.5Q189.1 20.4 188.7 16.8" stroke-width="0.32"/>
<path d="M188.7 16.8Q189.3 13.3 187.6 8.4" stroke-width="0.30"/>
<path d="M188.7 16.8Q191.1 13.0 190.7 9.7" stroke-width="0.30"/>
<path d="M188.7 16.8Q187.0 14.2 183.3 11.4" stroke-width="0.30"/>
<path d="M191.8 26.5Q187.9 22.6 182.0 21.0" stroke-width="0.32"/>
<path d="M182.0 21.0Q178.4 16.2 176.2 13.3" stroke-width="0.30"/>
<path d="M182.0 21.0Q179.4 18.2 174.9 15.8" stroke-width="0.30"/>
<path d="M212.0 48.8Q215.1 40.9 215.6 32.5" stroke-width="0.62"/>
<path d="M215.6 32.5Q216.4 24.9 215.6 19.9" stroke-width="0.45"/>
<path d="M215.6 19.9Q212.7 15.5 211.4 10.2" stroke-width="0.32"/>
<path d="M211.4 10.2Q210.9 7.2 209.6 1.4" stroke-width="0.30"/>
<path d="M211.4 10.2Q208.5 7.3 206.4 3.2" stroke-width="0.30"/>
<path d="M215.6 19.9Q217.5 14.8 220.5 10.4" stroke-width="0.32"/>
<path d="M220.5 10.4Q220.9 5.0 222.7 2.1" stroke-width="0.30"/>
<path d="M220.5 10.4Q222.5 5.4 223.5 1.7" stroke-width="0.30"/>
<path d="M215.6 19.9Q215.8 15.3 215.4 9.0" stroke-width="0.32"/>
<path d="M215.4 9.0Q218.5 6.5 219.4 1.5" stroke-width="0.30"/>
<path d="M215.4 9.0Q214.2 4.0 210.2 2.0" stroke-width="0.30"/>
<path d="M215.6 32.5Q219.2 25.6 220.4 21.1" stroke-width="0.45"/>
<path d="M220.4 21.1Q223.6 18.0 224.8 13.2" stroke-width="0.32"/>
<path d="M224.8 13.2Q223.4 10.8 224.9 6.0" stroke-width="0.30"/>
<path d="M224.8 13.2Q227.3 12.8 230.9 9.6" stroke-width="0.30"/>
<path d="M224.8 13.2Q226.2 8.7 225.6 6.7" stroke-width="0.30"/>
<path d="M220.4 21.1Q224.4 19.3 227.0 14.7" stroke-width="0.32"/>
<path d="M227.0 14.7Q230.6 11.2 233.1 10.7" stroke-width="0.30"/>
<path d="M227.0 14.7Q227.9 11.8 228.8 7.4" stroke-width="0.30"/>
<path d="M212.0 48.8Q206.3 40.6 199.1 34.8" stroke-width="0.62"/>
<path d="M199.1 34.8Q192.8 32.3 184.5 29.7" stroke-width="0.45"/>
<path d="M184.5 29.7Q177.4 26.4 172.8 25.7" stroke-width="0.32"/>
<path d="M172.8 25.7Q167.8 21.9 164.8 20.6" stroke-width="0.30"/>
<path d="M172.8 25.7Q167.3 25.9 162.7 25.9" stroke-width="0.30"/>
<path d="M184.5 29.7Q178.8 30.6 171.8 32.3" stroke-width="0.32"/>
<path d="M171.8 32.3Q168.0 32.7 161.6 35.2" stroke-width="0.30"/>
<path d="M171.8 32.3Q166.7 32.6 160.5 31.0" stroke-width="0.30"/>
<path d="M171.8 32.3Q166.9 32.1 161.0 30.8" stroke-width="0.30"/>
<path d="M199.1 34.8Q193.9 31.8 185.8 28.4" stroke-width="0.45"/>
<path d="M185.8 28.4Q179.9 24.2 176.4 21.3" stroke-width="0.32"/>
<path d="M176.4 21.3Q170.6 18.9 167.2 19.0" stroke-width="0.30"/>
<path d="M176.4 21.3Q173.8 17.6 168.7 14.4" stroke-width="0.30"/>
<path d="M176.4 21.3Q174.1 17.3 172.1 12.9" stroke-width="0.30"/>
<path d="M185.8 28.4Q180.9 24.2 177.1 19.6" stroke-width="0.32"/>
<path d="M177.1 19.6Q174.9 15.2 172.3 11.9" stroke-width="0.30"/>
<path d="M177.1 19.6Q175.1 13.6 175.3 10.2" stroke-width="0.30"/>
<path d="M177.1 19.6Q172.1 16.3 168.1 15.8" stroke-width="0.30"/>
<path d="M221.8 69.1Q226.9 60.6 233.5 50.2" stroke-width="0.86"/>
<path d="M233.5 50.2Q241.7 43.2 248.0 38.3" stroke-width="0.62"/>
<path d="M248.0 38.3Q253.0 31.5 255.7 24.5" stroke-width="0.45"/>
<path d="M255.7 24.5Q260.5 21.5 263.4 16.1" stroke-width="0.32"/>
<path d="M263.4 16.1Q264.9 12.3 269.0 8.8" stroke-width="0.30"/>
<path d="M263.4 16.1Q266.6 13.4 272.2 12.6" stroke-width="0.30"/>
<path d="M263.4 16.1Q266.9 13.7 272.1 12.3" stroke-width="0.30"/>
<path d="M255.7 24.5Q260.1 19.2 262.3 13.3" stroke-width="0.32"/>
<path d="M262.3 13.3Q266.7 9.3 269.9 5.1" stroke-width="0.30"/>
<path d="M262.3 13.3Q264.0 9.4 265.8 2.7" stroke-width="0.30"/>
<path d="M255.7 24.5Q262.5 21.1 266.9 18.4" stroke-width="0.32"/>
<path d="M266.9 18.4Q270.7 19.6 276.3 18.0" stroke-width="0.30"/>
<path d="M266.9 18.4Q271.9 15.7 276.0 13.7" stroke-width="0.30"/>
<path d="M248.0 38.3Q253.3 34.7 259.7 28.6" stroke-width="0.45"/>
<path d="M259.7 28.6Q260.9 22.9 265.0 17.6" stroke-width="0.32"/>
<path d="M265.0 17.6Q264.7 12.0 262.8 8.8" stroke-width="0.30"/>
<path d="M265.0 17.6Q264.2 12.0 264.3 8.6" stroke-width="0.30"/>
<path d="M259.7 28.6Q267.1 28.0 271.5 24.4" stroke-width="0.32"/>
<path d="M271.5 24.4Q277.7 23.8 281.5 24.6" stroke-width="0.30"/>
<path d="M271.5 24.4Q276.7 22.1 280.5 22.3" stroke-width="0.30"/>
<path d="M233.5 50.2Q239.8 43.3 243.9 35.9" stroke-width="0.62"/>
<path d="M243.9 35.9Q247.2 29.0 248.0 22.4" stroke-width="0.45"/>
<path d="M248.0 22.4Q249.4 16.7 253.1 12.3" stroke-width="0.32"/>
<path d="M253.1 12.3Q254.7 9.1 254.5 4.0" stroke-width="0.30"/>
<path d="M253.1 12.3Q257.5 10.3 261.1 6.5" stroke-width="0.30"/>
<path d="M248.0 22.4Q250.3 17.1 250.2 11.2" stroke-width="0.32"/>
<path d="M250.2 11.2Q252.9 6.2 253.9 2.6" stroke-width="0.30"/>
<path d="M250.2 11.2Q251.3 6.9 251.2 2.1" stroke-width="0.30"/>
<path d="M250.2 11.2Q246.9 5.3 246.5 2.0" stroke-width="0.30"/>
<path d="M243.9 35.9Q244.4 27.4 245.4 21.2" stroke-width="0.45"/>
<path d="M245.4 21.2Q246.4 14.2 250.4 9.6" stroke-width="0.32"/>
<path d="M250.4 9.6Q250.8 3.0 249.8 -1.1" stroke-width="0.30"/>
<path d="M250.4 9.6Q253.8 7.4 257.9 2.7" stroke-width="0.30"/>
<path d="M245.4 21.2Q248.9 16.3 250.0 9.5" stroke-width="0.32"/>
<path d="M250.0 9.5Q253.4 6.1 255.3 -0.0" stroke-width="0.30"/>
<path d="M250.0 9.5Q252.7 4.7 256.2 1.0" stroke-width="0.30"/>
<path d="M245.4 21.2Q247.2 14.8 246.0 8.4" stroke-width="0.32"/>
<path d="M246.0 8.4Q245.6 3.6 244.6 -1.0" stroke-width="0.30"/>
<path d="M246.0 8.4Q246.5 2.3 246.9 -0.9" stroke-width="0.30"/>
<path d="M233.5 50.2Q238.4 42.5 242.7 35.6" stroke-width="0.62"/>
<path d="M242.7 35.6Q245.8 32.6 251.6 26.6" stroke-width="0.45"/>
<path d="M251.6 26.6Q251.7 23.2 254.8 17.2" stroke-width="0.32"/>
<path d="M254.8 17.2Q255.7 12.9 255.2 8.6" stroke-width="0.30"/>
<path d="M254.8 17.2Q255.0 13.0 252.4 10.4" stroke-width="0.30"/>
<path d="M254.8 17.2Q258.3 15.1 260.7 11.0" stroke-width="0.30"/>
<path d="M251.6 26.6Q253.6 20.8 256.1 17.0" stroke-width="0.32"/>
<path d="M256.1 17.0Q256.1 11.2 256.0 8.0" stroke-width="0.30"/>
<path d="M256.1 17.0Q255.9 12.7 256.0 8.5" stroke-width="0.30"/>
<path d="M242.7 35.6Q249.2 31.8 255.3 28.1" stroke-width="0.45"/>
<path d="M255.3 28.1Q260.2 25.7 266.3 25.1" stroke-width="0.32"/>
<path d="M266.3 25.1Q270.6 23.8 274.7 25.0" stroke-width="0.30"/>
<path d="M266.3 25.1Q270.8 22.8 272.7 19.9" stroke-width="0.30"/>
<path d="M255.3 28.1Q259.2 23.5 262.2 19.9" stroke-width="0.32"/>
<path d="M262.2 19.9Q265.5 16.9 266.5 12.8" stroke-width="0.30"/>
<path d="M262.2 19.9Q265.9 17.2 267.7 14.1" stroke-width="0.30"/>
<path d="M255.3 28.1Q259.1 22.2 260.4 17.4" stroke-width="0.32"/>
<path d="M260.4 17.4Q262.3 12.0 261.8 7.4" stroke-width="0.30"/>
<path d="M260.4 17.4Q263.2 15.2 268.3 10.6" stroke-width="0.30"/>
<path d="M150.0 95.0Q146.1 84.7 141.7 76.8" stroke-width="0.70"/>
<path d="M141.7 76.8Q138.2 69.7 134.3 64.0" stroke-width="0.50"/>
<path d="M134.3 64.0Q133.8 56.8 133.2 52.2" stroke-width="0.36"/>
<path d="M133.2 52.2Q131.1 47.9 128.0 44.0" stroke-width="0.30"/>
<path d="M128.0 44.0Q124.3 42.0 121.3 39.4" stroke-width="0.30"/>
<path d="M121.3 39.4Q118.1 38.2 116.7 34.2" stroke-width="0.30"/>
<path d="M121.3 39.4Q118.4 36.9 114.6 37.3" stroke-width="0.30"/>
<path d="M128.0 44.0Q127.7 39.1 128.2 35.5" stroke-width="0.30"/>
<path d="M128.2 35.5Q129.2 32.2 130.4 29.2" stroke-width="0.30"/>
<path d="M128.2 35.5Q129.0 31.6 129.6 29.4" stroke-width="0.30"/>
<path d="M133.2 52.2Q135.6 48.5 135.1 43.5" stroke-width="0.30"/>
<path d="M135.1 43.5Q135.9 41.6 134.5 36.7" stroke-width="0.30"/>
<path d="M134.5 36.7Q132.3 32.7 132.5 31.0" stroke-width="0.30"/>
<path d="M134.5 36.7Q136.6 33.5 136.6 31.9" stroke-width="0.30"/>
<path d="M134.5 36.7Q136.3 34.1 137.0 32.0" stroke-width="0.30"/>
<path d="M135.1 43.5Q135.3 39.7 138.3 37.6" stroke-width="0.30"/>
<path d="M138.3 37.6Q140.1 35.8 141.7 33.3" stroke-width="0.30"/>
<path d="M138.3 37.6Q142.0 35.6 142.9 34.5" stroke-width="0.30"/>
<path d="M138.3 37.6Q139.3 33.4 140.4 32.2" stroke-width="0.30"/>
<path d="M133.2 52.2Q130.1 47.5 128.3 43.5" stroke-width="0.30"/>
<path d="M128.3 43.5Q129.8 39.9 129.3 35.5" stroke-width="0.30"/>
<path d="M129.3 35.5Q128.3 32.8 127.1 29.9" stroke-width="0.30"/>
<path d="M129.3 35.5Q129.8 32.4 131.0 29.7" stroke-width="0.30"/>
<path d="M128.3 43.5Q123.4 40.2 121.4 38.8" stroke-width="0.30"/>
<path d="M121.4 38.8Q118.6 36.9 114.5 36.8" stroke-width="0.30"/>
<path d="M121.4 38.8Q119.5 38.2 115.8 34.9" stroke-width="0.30"/>
<path d="M121.4 38.8Q118.5 39.6 114.0 37.6" stroke-width="0.30"/>
<path d="M134.3 64.0Q128.6 60.4 122.7 58.0" stroke-width="0.36"/>
<path d="M122.7 58.0Q117.8 56.5 113.0 55.5" stroke-width="0.30"/>
<path d="M113.0 55.5Q109.6 53.1 106.8 50.1" stroke-width="0.30"/>
<path d="M106.8 50.1Q102.7 49.9 100.4 47.7" stroke-width="0.30"/>
<path d="M106.8 50.1Q103.8 46.1 103.2 44.2" stroke-width="0.30"/>
<path d="M113.0 55.5Q108.6 55.4 105.3 53.6" stroke-width="0.30"/>
<path d="M105.3 53.6Q102.6 54.6 99.2 52.7" stroke-width="0.30"/>
<path d="M105.3 53.6Q102.6 53.7 99.2 53.8" stroke-width="0.30"/>
<path d="M122.7 58.0Q117.8 56.3 114.0 52.7" stroke-width="0.30"/>
<path d="M114.0 52.7Q113.7 48.6 111.0 44.5" stroke-width="0.30"/>
<path d="M111.0 44.5Q107.9 40.1 107.6 38.4" stroke-width="0.30"/>
<path d="M111.0 44.5Q108.1 41.9 106.6 39.6" stroke-width="0.30"/>
<path d="M111.0 44.5Q107.4 40.7 106.3 39.3" stroke-width="0.30"/>
<path d="M114.0 52.7Q110.9 49.0 108.6 46.8" stroke-width="0.30"/>
<path d="M108.6 46.8Q107.5 43.2 106.3 40.8" stroke-width="0.30"/>
<path d="M108.6 46.8Q109.0 42.7 108.1 40.4" stroke-width="0.30"/>
<path d="M108.6 46.8Q105.9 43.6 106.2 41.4" stroke-width="0.30"/>
<path d="M122.7 58.0Q119.9 54.4 114.4 52.0" stroke-width="0.30"/>
<path d="M114.4 52.0Q109.8 50.6 106.7 48.4" stroke-width="0.30"/>
<path d="M106.7 48.4Q105.4 44.8 102.7 42.2" stroke-width="0.30"/>
<path d="M106.7 48.4Q105.1 46.7 102.1 43.0" stroke-width="0.30"/>
<path d="M114.4 52.0Q111.8 50.2 108.3 47.1" stroke-width="0.30"/>
<path d="M108.3 47.1Q106.9 46.7 102.6 45.4" stroke-width="0.30"/>
<path d="M108.3 47.1Q105.7 45.2 104.7 42.3" stroke-width="0.30"/>
<path d="M141.7 76.8Q135.5 72.1 132.1 65.0" stroke-width="0.50"/>
<path d="M132.1 65.0Q132.8 58.5 131.8 52.5" stroke-width="0.36"/>
<path d="M131.8 52.5Q131.1 46.9 131.1 43.1" stroke-width="0.30"/>
<path d="M131.1 43.1Q133.8 38.7 135.4 36.1" stroke-width="0.30"/>
<path d="M135.4 36.1Q136.9 33.0 138.0 29.9" stroke-width="0.30"/>
<path d="M135.4 36.1Q137.9 33.1 140.5 31.5" stroke-width="0.30"/>
<path d="M131.1 43.1Q130.0 40.6 129.5 35.3" stroke-width="0.30"/>
<path d="M129.5 35.3Q128.0 33.6 126.4 29.6" stroke-width="0.30"/>
<path d="M129.5 35.3Q126.3 32.7 124.7 30.5" stroke-width="0.30"/>
<path d="M131.8 52.5Q130.4 47.8 127.7 44.2" stroke-width="0.30"/>
<path d="M127.7 44.2Q125.1 40.7 124.5 37.7" stroke-width="0.30"/>
<path d="M124.5 37.7Q121.8 35.3 119.5 34.8" stroke-width="0.30"/>
<path d="M124.5 37.7Q122.9 35.4 119.9 35.1" stroke-width="0.30"/>
<path d="M127.7 44.2Q125.6 40.8 122.1 39.0" stroke-width="0.30"/>
<path d="M122.1 39.0Q119.2 35.8 116.9 35.5" stroke-width="0.30"/>
<path d="M122.1 39.0Q121.4 35.1 118.2 34.0" stroke-width="0.30"/>
<path d="M132.1 65.0Q128.5 60.6 127.1 54.3" stroke-width="0.36"/>
<path d="M127.1 54.3Q124.9 48.7 121.2 45.8" stroke-width="0.30"/>
<path d="M121.2 45.8Q118.2 41.4 117.2 38.8" stroke-width="0.30"/>
<path d="M117.2 38.8Q116.4 35.4 113.6 33.8" stroke-width="0.30"/>
<path d="M117.2 38.8Q115.4 38.1 112.5 34.8" stroke-width="0.30"/>
<path d="M117.2 38.8Q114.9 35.3 115.3 32.8" stroke-width="0.30"/>
<path d="M121.2 45.8Q121.0 42.4 120.9 38.2" stroke-width="0.30"/>
<path d="M120.9 38.2Q121.5 35.0 120.5 31.7" stroke-width="0.30"/>
<path d="M120.9 38.2Q123.1 35.7 123.9 33.0" stroke-width="0.30"/>
<path d="M121.2 45.8Q121.8 41.2 120.3 37.7" stroke-width="0.30"/>
<path d="M120.3 37.7Q122.9 34.9 122.7 31.5" stroke-width="0.30"/>
<path d="M120.3 37.7Q119.0 34.6 116.6 32.8" stroke-width="0.30"/>
<path d="M127.1 54.3Q125.1 49.6 121.1 47.8" stroke-width="0.30"/>
<path d="M121.1 47.8Q119.6 46.2 117.9 42.2" stroke-width="0.30"/>
<path d="M117.9 42.2Q116.2 38.2 116.7 37.0" stroke-width="0.30"/>
<path d="M117.9 42.2Q117.7 40.6 117.9 37.3" stroke-width="0.30"/>
<path d="M117.9 42.2Q118.4 40.4 117.0 36.8" stroke-width="0.30"/>
<path d="M121.1 47.8Q121.6 45.0 120.7 41.2" stroke-width="0.30"/>
<path d="M120.7 41.2Q119.7 38.2 118.3 36.3" stroke-width="0.30"/>
<path d="M120.7 41.2Q119.2 38.2 120.1 36.0" stroke-width="0.30"/>
<path d="M132.1 65.0Q127.4 63.0 120.1 60.9" stroke-width="0.36"/>
<path d="M120.1 60.9Q117.1 55.4 114.9 52.0" stroke-width="0.30"/>
<path d="M114.9 52.0Q111.8 48.9 108.0 48.1" stroke-width="0.30"/>
<path d="M108.0 48.1Q104.7 46.5 103.1 44.9" stroke-width="0.30"/>
<path d="M108.0 48.1Q105.4 44.4 103.0 43.6" stroke-width="0.30"/>
<path d="M114.9 52.0Q113.3 48.6 111.8 43.6" stroke-width="0.30"/>
<path d="M111.8 43.6Q110.9 38.7 110.7 36.1" stroke-width="0.30"/>
<path d="M111.8 43.6Q110.0 40.9 105.7 39.4" stroke-width="0.30"/>
<path d="M120.1 60.9Q116.4 59.2 112.2 56.1" stroke-width="0.30"/>
<path d="M112.2 56.1Q110.1 54.5 105.9 54.1" stroke-width="0.30"/>
<path d="M105.9 54.1Q102.5 52.5 101.4 51.0" stroke-width="0.30"/>
<path d="M105.9 54.1Q102.6 54.1 100.4 55.1" stroke-width="0.30"/>
<path d="M105.9 54.1Q103.4 53.4 100.3 54.3" stroke-width="0.30"/>
<path d="M112.2 56.1Q108.9 53.9 108.5 49.2" stroke-width="0.30"/>
<path d="M108.5 49.2Q106.6 46.9 103.1 45.7" stroke-width="0.30"/>
<path d="M108.5 49.2Q104.8 46.9 103.0 45.4" stroke-width="0.30"/>
<path d="M178.0 55.0Q166.3 53.1 152.5 50.0" stroke-width="0.80"/>
<path d="M152.5 50.0Q142.9 48.0 132.7 44.0" stroke-width="0.58"/>
<path d="M132.7 44.0Q124.7 39.0 119.6 36.0" stroke-width="0.41"/>
<path d="M119.6 36.0Q113.9 29.8 110.4 26.3" stroke-width="0.30"/>
<path d="M119.6 36.0Q113.1 34.3 108.6 32.7" stroke-width="0.30"/>
<path d="M132.7 44.0Q124.9 41.8 117.5 40.7" stroke-width="0.41"/>
<path d="M117.5 40.7Q112.5 39.1 106.1 40.2" stroke-width="0.30"/>
<path d="M117.5 40.7Q111.7 40.1 106.2 40.3" stroke-width="0.30"/>
<path d="M152.5 50.0Q143.9 46.2 134.4 43.7" stroke-width="0.58"/>
<path d="M134.4 43.7Q129.6 39.4 122.0 36.8" stroke-width="0.41"/>
<path d="M122.0 36.8Q116.7 34.2 112.4 29.4" stroke-width="0.30"/>
<path d="M122.0 36.8Q118.6 30.8 114.5 27.3" stroke-width="0.30"/>
<path d="M134.4 43.7Q127.1 40.9 120.9 40.4" stroke-width="0.41"/>
<path d="M120.9 40.4Q116.2 39.4 110.8 37.1" stroke-width="0.30"/>
<path d="M120.9 40.4Q116.3 37.9 111.3 35.2" stroke-width="0.30"/>
<path d="M172.0 45.0Q160.6 41.3 149.8 35.8" stroke-width="0.70"/>
<path d="M149.8 35.8Q140.9 34.5 131.5 31.0" stroke-width="0.50"/>
<path d="M131.5 31.0Q124.1 28.1 117.5 26.9" stroke-width="0.36"/>
<path d="M117.5 26.9Q111.1 24.9 107.2 20.6" stroke-width="0.30"/>
<path d="M117.5 26.9Q110.6 24.3 106.4 23.5" stroke-width="0.30"/>
<path d="M117.5 26.9Q112.8 24.7 105.3 22.8" stroke-width="0.30"/>
<path d="M131.5 31.0Q125.1 28.8 116.1 26.2" stroke-width="0.36"/>
<path d="M116.1 26.2Q111.2 23.7 105.0 20.0" stroke-width="0.30"/>
<path d="M116.1 26.2Q110.0 23.7 104.1 19.6" stroke-width="0.30"/>
<path d="M116.1 26.2Q110.6 21.6 104.6 18.5" stroke-width="0.30"/>
<path d="M131.5 31.0Q125.4 29.3 118.5 26.8" stroke-width="0.36"/>
<path d="M118.5 26.8Q112.5 25.2 108.3 21.2" stroke-width="0.30"/>
<path d="M118.5 26.8Q114.6 25.0 109.8 20.3" stroke-width="0.30"/>
<path d="M149.8 35.8Q139.4 31.9 129.7 29.9" stroke-width="0.50"/>
<path d="M129.7 29.9Q122.1 28.7 112.3 25.6" stroke-width="0.36"/>
<path d="M112.3 25.6Q105.3 22.3 100.5 19.4" stroke-width="0.30"/>
<path d="M112.3 25.6Q107.1 22.8 99.2 18.5" stroke-width="0.30"/>
<path d="M129.7 29.9Q123.0 27.5 114.3 28.0" stroke-width="0.36"/>
<path d="M114.3 28.0Q109.4 29.3 102.0 27.7" stroke-width="0.30"/>
<path d="M114.3 28.0Q109.0 26.7 101.5 27.7" stroke-width="0.30"/>
<path d="M114.3 28.0Q107.7 30.0 102.0 29.0" stroke-width="0.30"/>
<path d="M182.0 64.0Q168.5 63.5 156.1 61.6" stroke-width="0.70"/>
<path d="M156.1 61.6Q148.1 57.7 137.5 53.7" stroke-width="0.50"/>
<path d="M137.5 53.7Q131.3 51.7 122.8 50.3" stroke-width="0.36"/>
<path d="M122.8 50.3Q117.4 49.2 109.9 49.8" stroke-width="0.30"/>
<path d="M122.8 50.3Q116.5 46.6 113.2 43.4" stroke-width="0.30"/>
<path d="M122.8 50.3Q116.5 47.1 112.2 46.3" stroke-width="0.30"/>
<path d="M137.5 53.7Q128.3 52.2 120.5 49.1" stroke-width="0.36"/>
<path d="M120.5 49.1Q114.2 46.5 107.8 46.1" stroke-width="0.30"/>
<path d="M120.5 49.1Q114.9 47.2 108.4 43.3" stroke-width="0.30"/>
<path d="M156.1 61.6Q148.4 58.5 138.5 52.6" stroke-width="0.50"/>
<path d="M138.5 52.6Q132.2 45.4 126.8 39.7" stroke-width="0.36"/>
<path d="M126.8 39.7Q123.0 32.2 120.2 27.0" stroke-width="0.30"/>
<path d="M126.8 39.7Q124.1 35.3 119.3 28.9" stroke-width="0.30"/>
<path d="M138.5 52.6Q133.1 46.6 127.0 40.6" stroke-width="0.36"/>
<path d="M127.0 40.6Q121.3 36.6 115.3 32.8" stroke-width="0.30"/>
<path d="M127.0 40.6Q122.3 35.1 118.7 30.0" stroke-width="0.30"/>
<path d="M127.0 40.6Q123.1 33.5 120.6 29.3" stroke-width="0.30"/>
<path d="M170.0 70.0Q162.4 64.5 154.6 60.7" stroke-width="0.50"/>
<path d="M154.6 60.7Q147.3 57.5 142.3 55.3" stroke-width="0.36"/>
<path d="M142.3 55.3Q137.4 52.0 133.6 49.4" stroke-width="0.30"/>
<path d="M133.6 49.4Q128.6 47.4 126.5 44.5" stroke-width="0.30"/>
<path d="M133.6 49.4Q129.3 47.2 127.7 43.6" stroke-width="0.30"/>
<path d="M133.6 49.4Q130.7 46.2 125.6 44.9" stroke-width="0.30"/>
<path d="M142.3 55.3Q138.4 53.2 133.7 48.5" stroke-width="0.30"/>
<path d="M133.7 48.5Q129.0 44.7 127.3 41.3" stroke-width="0.30"/>
<path d="M133.7 48.5Q128.4 45.4 126.0 43.1" stroke-width="0.30"/>
<path d="M142.3 55.3Q137.5 51.6 134.4 48.3" stroke-width="0.30"/>
<path d="M134.4 48.3Q132.4 43.7 129.4 41.5" stroke-width="0.30"/>
<path d="M134.4 48.3Q130.3 46.9 127.4 43.4" stroke-width="0.30"/>
<path d="M154.6 60.7Q148.4 56.2 143.6 53.8" stroke-width="0.36"/>
<path d="M143.6 53.8Q142.0 50.1 137.6 46.2" stroke-width="0.30"/>
<path d="M137.6 46.2Q137.2 41.4 134.2 38.7" stroke-width="0.30"/>
<path d="M137.6 46.2Q136.4 43.3 135.4 39.6" stroke-width="0.30"/>
<path d="M143.6 53.8Q139.9 52.6 133.4 50.2" stroke-width="0.30"/>
<path d="M133.4 50.2Q131.0 48.3 125.6 46.3" stroke-width="0.30"/>
<path d="M133.4 50.2Q129.5 47.0 126.2 44.3" stroke-width="0.30"/>
<path d="M133.4 50.2Q129.2 49.2 126.0 46.4" stroke-width="0.30"/>
<path d="M143.6 53.8Q139.6 49.6 134.1 47.6" stroke-width="0.30"/>
<path d="M134.1 47.6Q129.4 46.5 126.1 44.0" stroke-width="0.30"/>
<path d="M134.1 47.6Q131.6 44.9 127.1 42.3" stroke-width="0.30"/>
<path d="M134.1 47.6Q131.0 42.9 128.3 39.9" stroke-width="0.30"/>
<path d="M154.6 60.7Q147.6 59.3 141.0 56.2" stroke-width="0.36"/>
<path d="M141.0 56.2Q137.1 53.3 131.8 50.6" stroke-width="0.30"/>
<path d="M131.8 50.6Q129.2 47.3 125.0 44.3" stroke-width="0.30"/>
<path d="M131.8 50.6Q127.9 49.5 124.7 46.0" stroke-width="0.30"/>
<path d="M131.8 50.6Q129.1 49.6 123.8 47.9" stroke-width="0.30"/>
<path d="M141.0 56.2Q135.9 54.4 130.7 51.8" stroke-width="0.30"/>
<path d="M130.7 51.8Q125.9 47.3 123.9 45.4" stroke-width="0.30"/>
<path d="M130.7 51.8Q127.1 50.6 121.0 50.2" stroke-width="0.30"/>
<path d="M141.0 56.2Q137.2 53.7 130.7 53.9" stroke-width="0.30"/>
<path d="M130.7 53.9Q125.4 53.9 121.9 53.8" stroke-width="0.30"/>
<path d="M130.7 53.9Q127.5 51.4 123.4 50.1" stroke-width="0.30"/>
</g>
<path d="M186 62 L194 52 L200 48 L206 56 L212 46 L222 44 L228 44 V98 H180 L182 80Z" fill="#0f0f13" filter="url(#rough)"/>
<!-- bridge reflection -->
<rect x="96" y="111" width="54" height="3" fill="#16161b" filter="url(#b1)"/>
<rect x="96" y="115" width="54" height="4" fill="#4e4230" opacity=".65" filter="url(#b1)"/>
<path d="M100 114V119M106 114V119M113 114V119M120 114V119M127 114V119M134 114V119M141 114V119" stroke="#101014" stroke-width="1"/>
<!-- road -->
<linearGradient id="roadh" x1="0" y1="0" x2="1" y2="0"><stop offset="0" stop-color="#0e0e12" stop-opacity=".6"/><stop offset=".35" stop-color="#0e0e12" stop-opacity="0"/><stop offset="1" stop-color="#0e0e12" stop-opacity="0"/></linearGradient>
<path d="M36 147 Q65 136 98 125 Q110 121 150 121 Q146 126 144 132 Q156 140 167 147Z" fill="url(#road)" filter="url(#b1)"/>
<path d="M36 147 Q65 136 98 125 L100 147Z" fill="url(#roadh)"/>
<ellipse cx="152" cy="136" rx="9" ry="6" fill="#121216" filter="url(#rough)"/>
<g stroke="#3a3a46" stroke-width=".8" fill="none" opacity=".75" filter="url(#b3)">
 <path d="M78 147 Q100 132 128 124"/><path d="M100 147 Q112 133 136 124"/><path d="M124 147 Q120 134 140 125"/><path d="M132 147 Q128 134 144 126"/>
</g>
</svg>
</div>

<!-- preview tools -->
<div class="a" style="left:473px;top:98px;width:23px;height:21px;background:#cce8ff;border:1px solid #99d1ff"></div>
<svg style="left:477px;top:101px" width="16" height="17" viewBox="0 0 16 17">
 <rect x="0.5" y="0.5" width="15" height="14" rx="1" fill="#fff" stroke="#8a8ac8"/>
 <rect x="2" y="2" width="12" height="11" fill="#f7b21a"/>
 <path d="M2 9 Q7 5 14 8 V13 H2Z" fill="#e07a10"/>
 <circle cx="9" cy="5" r="2" fill="#fde6a0"/>
 <ellipse cx="8" cy="13.5" rx="5" ry="3" fill="#7878d8" stroke="#3a3a90" stroke-width=".7"/>
 <circle cx="8" cy="13.5" r="1.3" fill="#222255"/>
</svg>
<svg style="left:480px;top:132px" width="8" height="12" viewBox="0 0 8 12"><path d="M0.5 0.5L7.5 6L0.5 11.5Z" fill="#000"/></svg>
<svg style="left:476px;top:156px" width="16" height="17" viewBox="0 0 16 17">
 <rect x="1" y="3" width="6" height="10" fill="none" stroke="#b0b0f8" stroke-dasharray="2 1.5"/>
 <rect x="7.5" y="3" width="7" height="10" fill="#c8c8ff"/>
 <path d="M7.5 0.5V16.5" stroke="#b0b0f0"/>
</svg>

<!-- zoom tools -->
<svg style="left:475px;top:342px" width="18" height="17" viewBox="0 0 18 17">
 <path d="M10.5 10.5L15.5 15.5" stroke="#a0612a" stroke-width="2.6" stroke-linecap="round"/>
 <path d="M10.5 10.5L15.5 15.5" stroke="#e6a060" stroke-width="1.2" stroke-linecap="round"/>
 <circle cx="7" cy="6.5" r="5.5" fill="#f2f2ff" stroke="#4a4aa0" stroke-width="1.3"/>
 <path d="M4 6.5H10M7 3.5V9.5" stroke="#262680" stroke-width="1.8"/>
</svg>
<svg style="left:475px;top:370px" width="18" height="17" viewBox="0 0 18 17">
 <path d="M10.5 10.5L15.5 15.5" stroke="#a0612a" stroke-width="2.6" stroke-linecap="round"/>
 <path d="M10.5 10.5L15.5 15.5" stroke="#e6a060" stroke-width="1.2" stroke-linecap="round"/>
 <circle cx="7" cy="6.5" r="5.5" fill="#f2f2ff" stroke="#4a4aa0" stroke-width="1.3"/>
 <path d="M4 6.5H10" stroke="#262680" stroke-width="1.8"/>
</svg>
<svg style="left:475px;top:398px" width="18" height="17" viewBox="0 0 18 17">
 <path d="M10.5 10.5L15.5 15.5" stroke="#a0612a" stroke-width="2.6" stroke-linecap="round"/>
 <path d="M10.5 10.5L15.5 15.5" stroke="#e6a060" stroke-width="1.2" stroke-linecap="round"/>
 <circle cx="7" cy="6.5" r="5.5" fill="#f4f4ff" stroke="#5a5ab0" stroke-width="1.3"/>
 <path d="M2.5 13V15M4.5 13V15" stroke="#262680" stroke-width="1"/>
</svg>
<svg style="left:476px;top:425px" width="16" height="16" viewBox="0 0 16 16">
 <rect x="0.5" y="0.5" width="15" height="15" fill="#fff" stroke="#1e2a78"/>
 <rect x="2" y="2" width="12" height="12" fill="#2a3a9a"/>
 <path d="M3 3L6.5 6.5M13 3L9.5 6.5M3 13L6.5 9.5M13 13L9.5 9.5" stroke="#d8e0ff" stroke-width="1.6"/>
 <rect x="5.5" y="5.5" width="5" height="5" fill="#e8ecff"/>
</svg>

<!-- nav -->
<svg style="left:560px;top:454px" width="18" height="16" viewBox="0 0 18 16">
 <rect x="1" y="1" width="1.6" height="14" fill="#b8b8b8"/>
 <path d="M4.5 8L10 1V4.8H16.5V11.2H10V15Z" fill="#dcdcdc" stroke="#a8a8a8"/>
</svg>
<svg style="left:590px;top:454px" width="16" height="16" viewBox="0 0 16 16">
 <path d="M1.5 8L7 1V4.8H13.5V11.2H7V15Z" fill="#dcdcdc" stroke="#a8a8a8"/>
</svg>
<svg style="left:620px;top:454px" width="16" height="16" viewBox="0 0 16 16">
 <path d="M13.5 8L8 1V4.8H1.5V11.2H8V15Z" fill="#b4b4f0" stroke="#3a3aa0"/>
</svg>
<svg style="left:647px;top:454px" width="18" height="16" viewBox="0 0 18 16">
 <path d="M13.5 8L8 1V4.8H1.5V11.2H8V15Z" fill="#b4b4f0" stroke="#3a3aa0"/>
 <rect x="15" y="1" width="1.8" height="14" fill="#6a6ad0"/>
</svg>

<div class="t m" style="left:501px;top:457px">1/2</div>
<div class="t m" style="left:711px;top:457px">6%</div>
<div class="t m" style="left:501px;top:480px">sample.dng</div>

<!-- bottom bar -->
<div class="t" style="left:14px;top:541px">预设：</div>
<svg style="left:59px;top:538px" width="16" height="15" viewBox="0 0 16 15">
 <path d="M0.5 2.5Q0.5 0.5 2.5 0.5H6L7.5 2H14Q15.5 2 15.5 3.5V13Q15.5 14.5 14 14.5H2Q0.5 14.5 0.5 13Z" fill="#f5d37a" stroke="#c08a30"/>
 <path d="M2 5H15V13.5H2Z" fill="#fbe09a"/>
 <path d="M8 4.5Q11 5 10.5 8H13L9.5 12.5L6 8H8.5Q8.5 6.5 7 6Z" fill="#3cc020" stroke="#2a8a14" stroke-width=".6"/>
</svg>
<div class="a" style="left:85px;top:536px;width:123px;height:20px;background:#e3e3e3;border:1px solid #a9a9a9"></div>
<svg style="left:195px;top:544px" width="9" height="6" viewBox="0 0 9 6"><path d="M0.5 0.8L4.2 4.5L7.9 0.8" stroke="#333" stroke-width="1.1" fill="none"/></svg>
<svg style="left:218px;top:539px" width="14" height="14" viewBox="0 0 14 14">
 <path d="M0.5 0.5H11L13.5 3V13.5H0.5Z" fill="#5a5ad0" stroke="#3a3aa8"/>
 <rect x="3" y="0.5" width="7" height="4.5" fill="#fff"/>
 <rect x="7.5" y="1.2" width="1.5" height="3" fill="#5a5ad0"/>
 <rect x="2.5" y="7.5" width="9" height="6" fill="#f0f0f8"/>
</svg>
<svg style="left:247px;top:539px" width="14" height="14" viewBox="0 0 14 14">
 <path d="M2 2L12 12M12 2L2 12" stroke="#a0a0a0" stroke-width="4.4" stroke-linecap="round"/>
 <path d="M2 2L12 12M12 2L2 12" stroke="#cdcdcd" stroke-width="2.2" stroke-linecap="round"/>
</svg>

<div class="a" style="left:313px;top:535px;width:122px;height:22px;background:#e1e1e1;border:1px solid #adadad"></div>
<svg style="left:317px;top:537px" width="15" height="16" viewBox="0 0 15 16">
 <rect x="1.5" y="2.5" width="10" height="12" rx="1" fill="#fff" stroke="#6a6ab8"/>
 <rect x="3" y="4" width="7" height="9" fill="#e8eaf0"/>
 <path d="M6 1H14V9L11.5 6.5L6.5 11.5L3.5 8.5L8.5 3.5Z" fill="#8ad000" stroke="#4a8a00" stroke-width=".8" stroke-linejoin="round"/>
 <path d="M7.5 2H13V7" stroke="#e0ff40" stroke-width="1" fill="none"/>
</svg>
<div class="t" style="left:334px;top:540px">为</div>
<div class="t m" style="left:345px;top:541px;font-size:11px;letter-spacing:-0.6px;font-weight:bold">NConvert</div>
<div class="t" style="left:394px;top:540px">导出⋯</div>

<svg style="left:493px;top:539px" width="14" height="14" viewBox="0 0 14 14">
 <rect width="14" height="14" fill="#3b5998"/>
 <path d="M7.3 14V8.2H5.8V5.9H7.3V4.8Q7.3 2.2 10.2 2.2H11.8V4.5H10.6Q9.9 4.5 9.9 5.2V5.9H11.8L11.5 8.2H9.9V14Z" fill="#fff"/>
 <rect y="12" width="14" height="2" fill="#6f86b8" opacity=".5"/>
</svg>
<svg style="left:525px;top:538px" width="16" height="16" viewBox="0 0 16 16">
 <rect x="0.5" y="0.5" width="15" height="15" rx="2" fill="#f4f4f4" stroke="#c4c4c4"/>
 <path d="M3 10Q6 11.5 9 9.5Q12 7 11.5 5L13 4L11.3 4.2Q10 3 8.5 4.2Q7.6 5 8 6.3Q5.5 6.3 3.6 4.5Q3 6.5 4.8 7.6L4 7.5Q4.3 9 5.8 9.4Q4.5 10 3 10Z" fill="#2fa3e0"/>
</svg>

<div class="a" style="left:596px;top:535px;width:73px;height:22px;background:#e1e1e1;border:1px solid #adadad"></div>
<svg style="left:601px;top:538px" width="17" height="15" viewBox="0 0 17 15">
 <rect x="0.5" y="0.5" width="12" height="10" fill="#d4d4fa" stroke="#9a9ad0"/>
 <rect x="3.5" y="3.5" width="12" height="10.5" fill="#f6b420" stroke="#8a8ac8"/>
 <path d="M4 9Q9 7 15 10V13.5H4Z" fill="#c86a10"/>
 <path d="M1 6.5H5V3.5L10 8L5 12.5V9.5H1Z" fill="#7ad01a" stroke="#3a9010" stroke-width=".6"/>
</svg>
<div class="t" style="left:619px;top:540px">转换</div><div class="t" style="left:644px;top:540px">(</div><div class="t" style="left:648px;top:541px;font-size:10.5px;text-decoration:underline">C</div><div class="t" style="left:655px;top:540px">)</div>
<div class="a" style="left:677px;top:535px;width:73px;height:22px;background:#e1e1e1;border:1px solid #adadad"></div>
<div class="t" style="left:700px;top:540px">关闭</div>

<!-- menu 1 -->
<div class="a" style="left:127px;top:96px;width:108px;height:270px;background:#f0f0f0;border:1px solid #cccccc;box-shadow:2px 2px 2px rgba(0,0,0,.45)"></div>
<div class="a" style="left:130px;top:99px;width:98px;height:22px;background:#91c9f7"></div>
<div class="t" style="left:162px;top:104px">添加</div>
<div class="t" style="left:162px;top:126px">调整</div>
<div class="t" style="left:162px;top:148px">模糊</div>
<div class="t" style="left:162px;top:170px">通道</div>
<div class="t" style="left:162px;top:192px">增强</div>
<div class="t" style="left:162px;top:215px;font-size:12.5px">Frame</div>
<div class="t" style="left:162px;top:236px">元数据</div>
<div class="t" style="left:162px;top:258px">噪音</div>
<div class="t" style="left:162px;top:280px">像素化</div>
<div class="t" style="left:162px;top:303px;font-size:12.5px">Stylize</div>
<div class="t" style="left:162px;top:324px">变换</div>
<div class="t" style="left:162px;top:346px">视频</div>
<div class="arr" style="left:216px;top:106px"></div>
<div class="arr" style="left:216px;top:128px"></div>
<div class="arr" style="left:216px;top:150px"></div>
<div class="arr" style="left:216px;top:172px"></div>
<div class="arr" style="left:216px;top:194px"></div>
<div class="arr" style="left:216px;top:216px"></div>
<div class="arr" style="left:216px;top:238px"></div>
<div class="arr" style="left:216px;top:260px"></div>
<div class="arr" style="left:216px;top:282px"></div>
<div class="arr" style="left:216px;top:304px"></div>
<div class="arr" style="left:216px;top:326px"></div>
<div class="arr" style="left:216px;top:348px"></div>

<!-- menu 2 -->
<div class="a" style="left:229px;top:97px;width:103px;height:73px;background:#f0f0f0;border:1px solid #cccccc;box-shadow:2px 2px 2px rgba(0,0,0,.45)"></div>
<div class="a" style="left:231px;top:144px;width:97px;height:23px;background:#91c9f7"></div>
<div class="t" style="left:263px;top:105px">二维码</div>
<div class="t" style="left:263px;top:127px">文字</div>
<div class="t" style="left:263px;top:150px">水印</div>
<svg style="left:234px;top:126px" width="16" height="14" viewBox="0 0 16 14">
 <rect x="0.5" y="0.5" width="15" height="13" rx="1" fill="#e8e8f8" stroke="#8080c0"/>
 <rect x="2" y="2" width="12" height="10" fill="#f8c020"/>
 <path d="M2 8Q6 4 14 6V12H2Z" fill="#f08a10"/>
 <circle cx="5" cy="4.5" r="1.6" fill="#fff0b0"/>
 <rect x="3" y="8" width="10" height="3.5" fill="#f8d890" opacity=".6"/>
 <text x="3" y="11.6" font-size="5" font-family="Liberation Sans" font-weight="bold" fill="#4a4ab0">Text</text>
</svg>
<svg style="left:234px;top:149px" width="16" height="15" viewBox="0 0 16 15">
 <path d="M4.5 0.5H13L15.5 3V12.5H4.5Z" fill="#f4f4fc" stroke="#9090c0"/>
 <circle cx="10" cy="7" r="3.2" fill="#6a6ad0"/>
 <circle cx="10" cy="7" r="1.5" fill="#e8e8ff"/>
 <circle cx="4.5" cy="6.5" r="2.3" fill="#d9a870" stroke="#9a6a3a" stroke-width=".5"/>
 <rect x="3.5" y="8" width="2" height="3" fill="#c08850"/>
 <path d="M0.5 12.5Q0.5 10.5 4.5 10.5Q8.5 10.5 8.5 12.5V14.5H0.5Z" fill="#d9a870" stroke="#9a6a3a" stroke-width=".5"/>
</svg>
</body></html>
